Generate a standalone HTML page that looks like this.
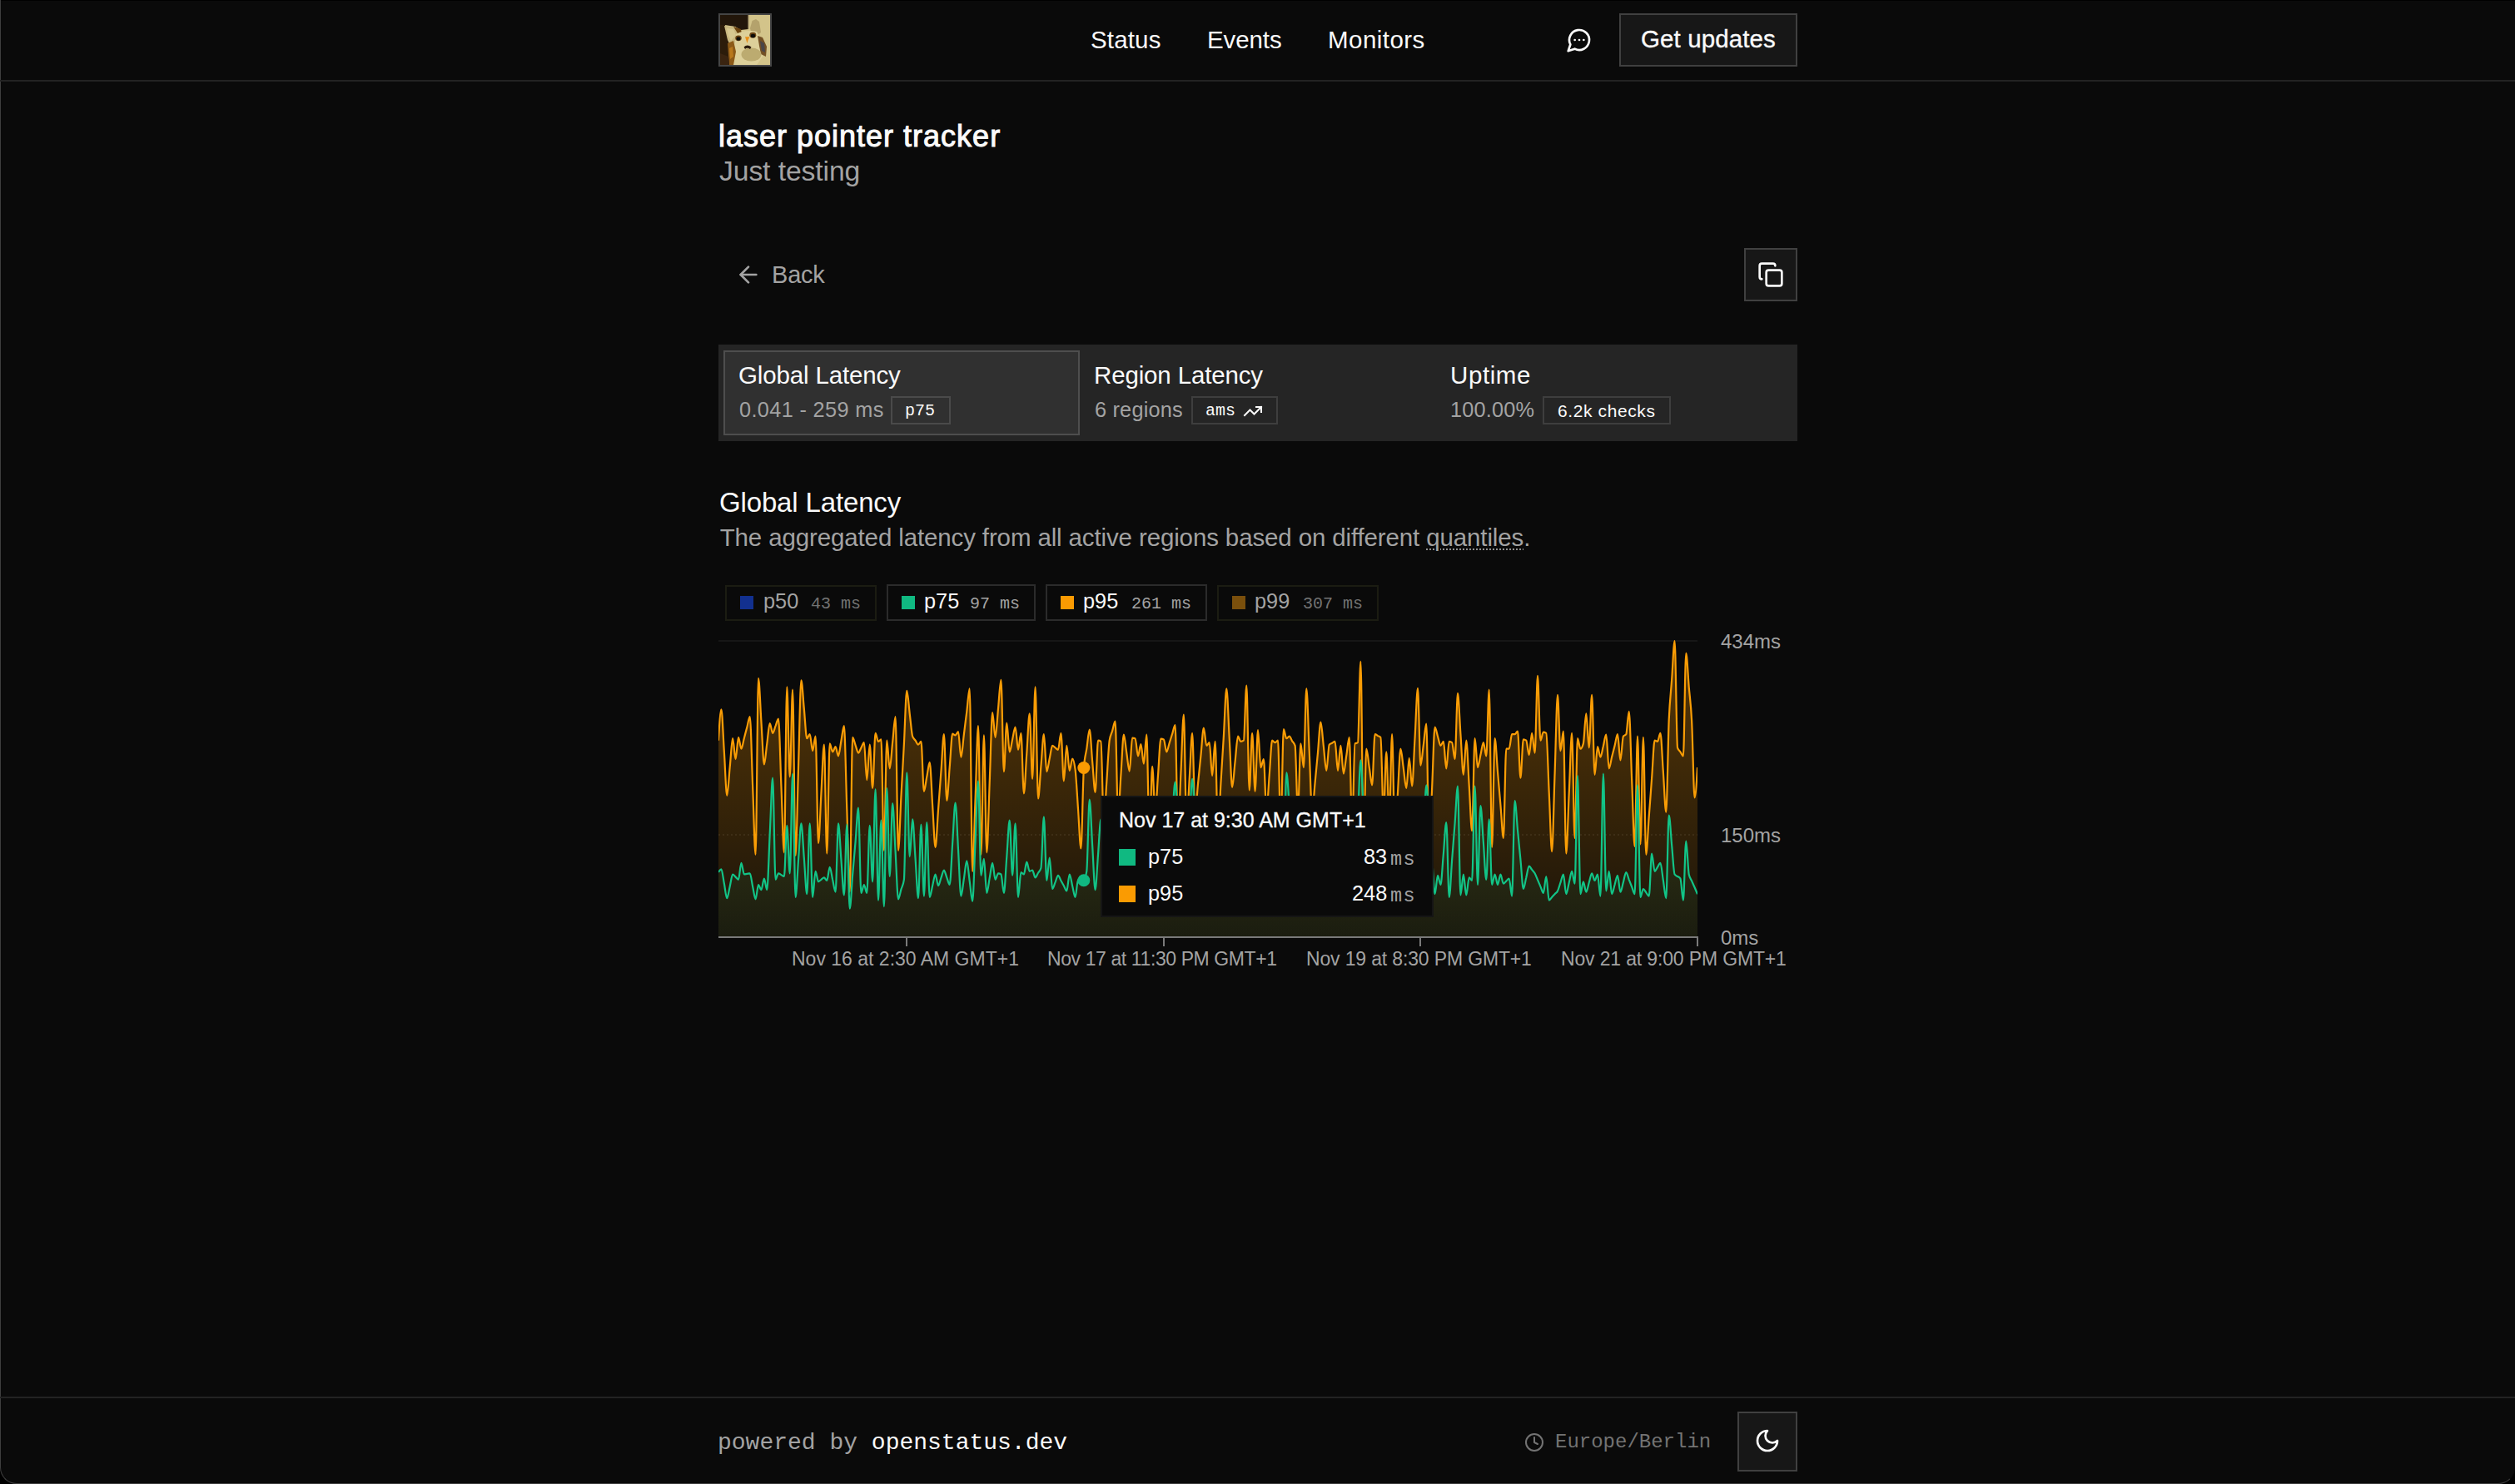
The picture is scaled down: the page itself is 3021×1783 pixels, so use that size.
<!DOCTYPE html>
<html><head><meta charset="utf-8">
<style>
*{box-sizing:border-box;margin:0;padding:0}
html,body{width:3021px;height:1783px;overflow:hidden;background:#000}
body{position:relative;font-family:"Liberation Sans",sans-serif;color:#fafafa}
.win{position:absolute;left:0;top:0;width:3021px;height:1783px;background:#0a0a0a;border-left:1px solid #3e3e3e;border-bottom:1px solid #3e3e3e;border-right:1px solid #0a0a0a;border-radius:0 0 20px 20px}
.t{position:absolute;white-space:nowrap;line-height:1}
.s{font-family:"Liberation Sans",sans-serif}
.m{font-family:"Liberation Mono",monospace}
.hline{position:absolute;left:0;width:3021px;height:2px;background:#232323}
.btn{position:absolute;background:#171717;border:2px solid #404040}
.badge{position:absolute;border:2px solid #3e3e3e}
.leg{position:absolute;top:702px;height:44px;border:2px solid #262626}
.sq{position:absolute;width:16px;height:16px}
svg{position:absolute;overflow:visible}
</style></head><body>
<div class="win"></div><div style="position:absolute;left:1px;top:0;width:3020px;height:1px;background:#000"></div>
<!-- header -->
<div class="hline" style="top:96px"></div>
<div style="position:absolute;left:863px;top:16px;width:64px;height:64px;border:2px solid #454545;overflow:hidden;background:#2a1a08">
<svg style="left:0;top:0" width="60" height="60" viewBox="0 0 60 60">
<rect width="60" height="60" fill="#d3c48a"/>
<path d="M0 0H34V17L25 18L18 14L6 12L0 13Z" fill="#22160a"/>
<path d="M0 12L6 12L9 28L13 40L12 60H0Z" fill="#2c1c0a"/>
<rect x="33.5" y="0" width="1.6" height="17" fill="#b8a878"/>
<path d="M5 13L18 14L24 19L20 30L13 38L9 30Z" fill="#c9b880"/>
<path d="M8 16L16 17L19 24L13 31L10 25Z" fill="#d6c790"/>
<path d="M16 14L25 17L26 23L21 22Z" fill="#6a420e"/>
<path d="M36 16L38.5 7L43 5L47 8L49 21L44 25L37 20Z" fill="#b4a26c"/>
<path d="M19 23Q30 17 44 20L50 30L51 50L44 60H14L17 42Z" fill="#ddd09a"/>
<path d="M9 34L16 31L19 44L16 60L11 60L10 48Z" fill="#8c5a18"/>
<path d="M11 40L15 38L16 50L12 53Z" fill="#b8781c"/>
<path d="M0 46L10 50L11 60H0Z" fill="#3a2410"/>
<path d="M45 25L51 27L56 38L55 50L49 47L47 37Z" fill="#735024"/>
<path d="M48 31L53 34L54 45L50 43Z" fill="#4a4648"/>
<ellipse cx="37.5" cy="47.5" rx="12" ry="8" fill="#bcab70"/>
<ellipse cx="22" cy="27.8" rx="3.8" ry="3.4" fill="#6a4414"/>
<ellipse cx="22" cy="28.5" rx="2.5" ry="2.3" fill="#0d0d0a"/>
<ellipse cx="39.3" cy="24.2" rx="4" ry="3.4" fill="#6a4414"/>
<ellipse cx="39.5" cy="25" rx="2.7" ry="2.3" fill="#0d0d0a"/>
<path d="M30 26.3L35.5 26.3L33.5 30.5L32.5 34Z" fill="#e8901a"/>
<path d="M28.5 38.5Q32.5 34.5 37.5 38.5L36 41Q32.5 38.5 30 41Z" fill="#2a1a0a"/>
</svg>

</div>
<div class="t s" style="left:1310px;top:32.5px;font-size:29.5px;letter-spacing:0.15px">Status</div>
<div class="t s" style="left:1450px;top:32.5px;font-size:29.5px;letter-spacing:-0.1px">Events</div>
<div class="t s" style="left:1595px;top:32.5px;font-size:29.5px;letter-spacing:0.45px">Monitors</div>
<svg style="left:1881px;top:32.3px" width="32" height="32" viewBox="0 0 24 24" fill="none" stroke="#fafafa" stroke-width="2" stroke-linecap="round" stroke-linejoin="round"><path d="M7.9 20A9 9 0 1 0 4 16.1L2 22Z"/><path d="M8 12h.01"/><path d="M12 12h.01"/><path d="M16 12h.01"/></svg>
<div class="btn" style="left:1945px;top:16px;width:214px;height:64px"></div>
<div class="t s" style="left:1971px;top:32px;font-size:29.5px;letter-spacing:0.1px;-webkit-text-stroke:0.35px #fafafa">Get updates</div>

<!-- title -->
<div class="t s" style="left:863px;top:145.5px;font-size:36px;letter-spacing:1px;-webkit-text-stroke:1px #fafafa">laser pointer tracker</div>
<div class="t s" style="left:864px;top:188.5px;font-size:33.7px;letter-spacing:-0.1px;color:#a3a3a3">Just testing</div>

<!-- back -->
<svg style="left:882.7px;top:313.6px" width="32" height="32" viewBox="0 0 24 24" fill="none" stroke="#a3a3a3" stroke-width="2" stroke-linecap="round" stroke-linejoin="round"><path d="m12 19-7-7 7-7"/><path d="M19 12H5"/></svg>
<div class="t s" style="left:927px;top:316.2px;font-size:29px;letter-spacing:-0.2px;color:#a3a3a3">Back</div>
<div class="btn" style="left:2095px;top:298px;width:64px;height:64px"></div>
<svg style="left:2111px;top:313.6px" width="32" height="32" viewBox="0 0 24 24" fill="none" stroke="#fafafa" stroke-width="2" stroke-linecap="round" stroke-linejoin="round"><rect width="14" height="14" x="8" y="8" rx="2" ry="2"/><path d="M4 16c-1.1 0-2-.9-2-2V4c0-1.1.9-2 2-2h10c1.1 0 2 .9 2 2"/></svg>

<!-- tabs -->
<div style="position:absolute;left:863px;top:414px;width:1296px;height:116px;background:#252525"></div>
<div style="position:absolute;left:869px;top:421px;width:428px;height:102px;background:#303030;border:2px solid #4e4e4e"></div>
<div class="t s" style="left:887px;top:435.5px;font-size:29.5px;letter-spacing:-0.15px">Global Latency</div>
<div class="t s" style="left:888px;top:479.5px;font-size:25.3px;letter-spacing:0.35px;color:#a3a3a3">0.041 - 259 ms</div>
<div class="badge" style="left:1070px;top:476px;width:72px;height:34px;border-color:#4a4a4a"></div>
<div class="t m" style="left:1087px;top:484px;font-size:20px">p75</div>

<div class="t s" style="left:1314px;top:435.5px;font-size:29.5px;letter-spacing:-0.15px">Region Latency</div>
<div class="t s" style="left:1315px;top:479.5px;font-size:25.3px;letter-spacing:0.2px;color:#a3a3a3">6 regions</div>
<div class="badge" style="left:1431px;top:476px;width:104px;height:34px"></div>
<div class="t m" style="left:1448px;top:484px;font-size:20px">ams</div>
<svg style="left:1492.5px;top:481.5px" width="24" height="24" viewBox="0 0 24 24" fill="none" stroke="#fafafa" stroke-width="2" stroke-linecap="square" stroke-linejoin="miter"><polyline points="22 7 13.5 15.5 8.5 10.5 2 17"/><polyline points="16 7 22 7 22 13"/></svg>

<div class="t s" style="left:1742px;top:435.5px;font-size:29.5px;letter-spacing:0.6px">Uptime</div>
<div class="t s" style="left:1742px;top:479.5px;font-size:25.3px;letter-spacing:0.2px;color:#a3a3a3">100.00%</div>
<div class="badge" style="left:1853px;top:476px;width:154px;height:34px"></div>
<div class="t s" style="left:1871px;top:483px;font-size:21px;letter-spacing:0.6px">6.2k checks</div>

<!-- section -->
<div class="t s" style="left:864px;top:586.5px;font-size:33px;letter-spacing:-0.15px">Global Latency</div>
<div class="t s" style="left:864.7px;top:630.9px;font-size:29.5px;letter-spacing:-0.13px;color:#a3a3a3">The aggregated latency from all active regions based on different <span style="text-decoration:underline dotted #8f8f8f;text-decoration-thickness:2px;text-underline-offset:4px">quantiles</span>.</div>

<!-- legend -->
<div style="position:absolute;left:871px;top:703px;width:182px;height:43px;border:2px solid #1b1c12"></div>
<div class="sq" style="left:889px;top:716px;background:#12308f"></div>
<div class="t s" style="left:917px;top:710px;font-size:25.3px;color:#a3a3a3">p50</div>
<div class="t m" style="left:974px;top:716px;font-size:20px;color:#737373">43 ms</div>

<div style="position:absolute;left:1065px;top:702px;width:179px;height:44px;border:2px solid #2b2b2b"></div>
<div class="sq" style="left:1083px;top:716px;background:#10b981"></div>
<div class="t s" style="left:1110px;top:710px;font-size:25.3px;color:#fafafa">p75</div>
<div class="t m" style="left:1165px;top:716px;font-size:20px;color:#a3a3a3">97 ms</div>

<div style="position:absolute;left:1256px;top:702px;width:194px;height:44px;border:2px solid #2b2b2b"></div>
<div class="sq" style="left:1274px;top:716px;background:#fa9b02"></div>
<div class="t s" style="left:1301px;top:710px;font-size:25.3px;color:#fafafa">p95</div>
<div class="t m" style="left:1359px;top:716px;font-size:20px;color:#a3a3a3">261 ms</div>

<div style="position:absolute;left:1462px;top:703px;width:194px;height:43px;border:2px solid #1b1c12"></div>
<div class="sq" style="left:1480px;top:716px;background:#7a4f0c"></div>
<div class="t s" style="left:1507px;top:710px;font-size:25.3px;color:#a3a3a3">p99</div>
<div class="t m" style="left:1565px;top:716px;font-size:20px;color:#737373">307 ms</div>


<!-- chart -->
<svg style="left:0;top:0" width="3021" height="1783" viewBox="0 0 3021 1783">
<defs>
<linearGradient id="go" x1="0" y1="0" x2="0" y2="1"><stop offset="0" stop-color="#ff9a00" stop-opacity="0.32"/><stop offset="1" stop-color="#ff9a00" stop-opacity="0.07"/></linearGradient>
<linearGradient id="gg" x1="0" y1="0" x2="0" y2="1"><stop offset="0" stop-color="#10b981" stop-opacity="0.13"/><stop offset="1" stop-color="#10b981" stop-opacity="0.05"/></linearGradient>
<clipPath id="cp"><rect x="863" y="700" width="1176" height="426"/></clipPath>
</defs>
<line x1="863" y1="770" x2="2039" y2="770" stroke="#171717" stroke-width="2"/>
<line x1="863" y1="1003" x2="2039" y2="1003" stroke="#3a3a3a" stroke-opacity="0.35" stroke-width="2" stroke-dasharray="2 3"/>
<g clip-path="url(#cp)">
<path d="M863.0,889.7C864.1,871.0,865.3,852.3,866.4,852.3C867.6,852.3,868.7,886.8,869.9,904.0C871.0,921.3,872.1,955.8,873.3,955.8C874.4,955.8,875.6,932.9,876.7,921.5C877.9,910.0,879.0,887.2,880.1,887.2C881.3,887.2,882.4,912.1,883.6,912.1C884.7,912.1,885.9,885.9,887.0,885.9C888.1,885.9,889.3,899.7,890.4,899.7C891.6,899.7,892.7,891.1,893.9,886.8C895.0,882.5,896.1,878.2,897.3,873.9C898.4,869.6,899.6,861.0,900.7,861.0C901.9,861.0,903.0,916.3,904.1,943.9C905.3,971.6,906.4,1026.8,907.6,1026.8C908.7,1026.8,909.9,814.9,911.0,814.9C912.1,814.9,913.3,849.4,914.4,866.6C915.6,883.9,916.7,918.4,917.9,918.4C919.0,918.4,920.1,901.9,921.3,893.7C922.4,885.4,923.6,869.0,924.7,869.0C925.9,869.0,927.0,880.9,928.1,880.9C929.3,880.9,930.4,875.1,931.6,872.2C932.7,869.3,933.9,863.5,935.0,863.5C936.1,863.5,937.3,917.1,938.4,943.9C939.6,970.7,940.7,1024.3,941.9,1024.3C943.0,1024.3,944.1,825.3,945.3,825.3C946.4,825.3,947.6,933.3,948.7,933.3C949.9,933.3,951.0,828.6,952.1,828.6C953.3,828.6,954.4,1028.1,955.6,1028.1C956.7,1028.1,957.9,957.8,959.0,922.7C960.1,887.6,961.3,817.4,962.4,817.4C963.6,817.4,964.7,840.6,965.9,852.3C967.0,863.9,968.1,887.2,969.3,887.2C970.4,887.2,971.6,882.2,972.7,882.2C973.9,882.2,975.0,902.1,976.1,902.1C977.3,902.1,978.4,884.7,979.6,884.7C980.7,884.7,981.9,1013.1,983.0,1013.1C984.1,1013.1,985.3,973.6,986.4,953.9C987.6,934.1,988.7,894.7,989.9,894.7C991.0,894.7,992.1,1025.6,993.3,1025.6C994.4,1025.6,995.6,893.4,996.7,893.4C997.9,893.4,999.0,903.4,1000.1,903.4C1001.3,903.4,1002.4,897.2,1003.6,897.2C1004.7,897.2,1005.9,908.4,1007.0,908.4C1008.1,908.4,1009.3,896.3,1010.4,890.3C1011.6,884.3,1012.7,872.2,1013.9,872.2C1015.0,872.2,1016.1,938.7,1017.3,972.0C1018.4,1005.2,1019.6,1071.7,1020.7,1071.7C1021.9,1071.7,1023.0,885.9,1024.1,885.9C1025.3,885.9,1026.4,892.2,1027.6,895.3C1028.7,898.4,1029.9,904.6,1031.0,904.6C1032.1,904.6,1033.3,900.5,1034.4,898.4C1035.6,896.3,1036.7,892.2,1037.9,892.2C1039.0,892.2,1040.1,937.1,1041.3,937.1C1042.4,937.1,1043.6,894.7,1044.7,894.7C1045.9,894.7,1047.0,947.0,1048.1,947.0C1049.3,947.0,1050.4,880.9,1051.6,880.9C1052.7,880.9,1053.9,890.9,1055.0,890.9C1056.1,890.9,1057.3,888.4,1058.4,888.4C1059.6,888.4,1060.7,1021.8,1061.9,1021.8C1063.0,1021.8,1064.1,889.7,1065.3,889.7C1066.4,889.7,1067.6,923.3,1068.7,923.3C1069.9,923.3,1071.0,902.6,1072.1,892.2C1073.3,881.8,1074.4,861.0,1075.6,861.0C1076.7,861.0,1077.9,1021.8,1079.0,1021.8C1080.1,1021.8,1081.3,979.2,1082.4,957.8C1083.6,936.5,1084.7,915.2,1085.9,893.8C1087.0,872.5,1088.1,829.8,1089.3,829.8C1090.4,829.8,1091.6,848.1,1092.7,857.3C1093.9,866.4,1095.0,881.4,1096.1,884.7C1097.3,888.0,1098.4,888.0,1099.6,889.7C1100.7,891.3,1101.9,894.7,1103.0,894.7C1104.1,894.7,1105.3,890.9,1106.4,890.9C1107.6,890.9,1108.7,950.8,1109.9,950.8C1111.0,950.8,1112.1,939.1,1113.3,933.3C1114.4,927.5,1115.6,915.9,1116.7,915.9C1117.9,915.9,1119.0,949.9,1120.1,967.0C1121.3,984.0,1122.4,1018.1,1123.6,1018.1C1124.7,1018.1,1125.9,987.9,1127.0,972.8C1128.1,957.7,1129.3,942.6,1130.4,927.5C1131.6,912.4,1132.7,882.2,1133.9,882.2C1135.0,882.2,1136.1,962.0,1137.3,962.0C1138.4,962.0,1139.6,935.2,1140.7,921.8C1141.9,908.5,1143.0,881.7,1144.1,881.7C1145.3,881.7,1146.4,883.4,1147.6,883.4C1148.7,883.4,1149.9,879.2,1151.0,879.2C1152.1,879.2,1153.3,909.6,1154.4,909.6C1155.6,909.6,1156.7,891.3,1157.9,882.2C1159.0,873.1,1160.1,863.9,1161.3,854.8C1162.4,845.6,1163.6,827.3,1164.7,827.3C1165.9,827.3,1167.0,1046.8,1168.1,1046.8C1169.3,1046.8,1170.4,988.6,1171.6,959.5C1172.7,930.4,1173.9,872.2,1175.0,872.2C1176.1,872.2,1177.3,1026.8,1178.4,1026.8C1179.6,1026.8,1180.7,883.4,1181.9,883.4C1183.0,883.4,1184.1,1024.3,1185.3,1024.3C1186.4,1024.3,1187.6,968.2,1188.7,940.2C1189.9,912.1,1191.0,856.0,1192.1,856.0C1193.3,856.0,1194.4,885.9,1195.6,885.9C1196.7,885.9,1197.9,862.9,1199.0,851.4C1200.1,839.9,1201.3,816.9,1202.4,816.9C1203.6,816.9,1204.7,927.1,1205.9,927.1C1207.0,927.1,1208.1,868.5,1209.3,868.5C1210.4,868.5,1211.6,903.4,1212.7,903.4C1213.9,903.4,1215.0,893.4,1216.1,888.4C1217.3,883.4,1218.4,873.5,1219.6,873.5C1220.7,873.5,1221.9,900.9,1223.0,900.9C1224.1,900.9,1225.3,880.9,1226.4,880.9C1227.6,880.9,1228.7,953.3,1229.9,953.3C1231.0,953.3,1232.1,921.3,1233.3,905.3C1234.4,889.3,1235.6,857.3,1236.7,857.3C1237.9,857.3,1239.0,935.8,1240.1,935.8C1241.3,935.8,1242.4,825.3,1243.6,825.3C1244.7,825.3,1245.9,959.5,1247.0,959.5C1248.1,959.5,1249.3,933.7,1250.4,920.8C1251.6,908.0,1252.7,882.2,1253.9,882.2C1255.0,882.2,1256.1,927.1,1257.3,927.1C1258.4,927.1,1259.6,916.7,1260.7,911.5C1261.9,906.3,1263.0,895.9,1264.1,895.9C1265.3,895.9,1266.4,897.6,1267.6,898.4C1268.7,899.2,1269.9,900.9,1271.0,900.9C1272.1,900.9,1273.3,880.9,1274.4,880.9C1275.6,880.9,1276.7,938.3,1277.9,938.3C1279.0,938.3,1280.1,895.9,1281.3,895.9C1282.4,895.9,1283.6,925.8,1284.7,925.8C1285.9,925.8,1287.0,911.6,1288.1,911.6C1289.3,911.6,1290.4,915.9,1291.6,924.6C1292.7,933.2,1293.9,956.2,1295.0,972.0C1296.1,987.8,1297.3,1019.4,1298.4,1019.4C1299.6,1019.4,1300.7,937.9,1301.9,922.6C1303.0,907.3,1304.1,907.3,1305.3,899.7C1306.4,892.0,1307.6,876.7,1308.7,876.7C1309.9,876.7,1311.0,901.8,1312.1,914.4C1313.3,926.9,1314.4,952.0,1315.6,952.0C1316.7,952.0,1317.9,889.7,1319.0,889.7C1320.1,889.7,1321.3,890.1,1322.4,890.9C1323.6,891.8,1324.7,988.9,1325.9,988.9C1327.0,988.9,1328.1,955.8,1329.3,939.3C1330.4,922.8,1331.6,897.3,1332.7,889.7C1333.9,882.0,1335.0,882.0,1336.1,878.2C1337.3,874.4,1338.4,866.7,1339.6,866.7C1340.7,866.7,1341.9,979.9,1343.0,979.9C1344.1,979.9,1345.3,947.5,1346.4,931.3C1347.6,915.1,1348.7,882.7,1349.9,882.7C1351.0,882.7,1352.1,897.3,1353.3,904.6C1354.4,912.0,1355.6,926.6,1356.7,926.6C1357.9,926.6,1359.0,886.7,1360.1,886.7C1361.3,886.7,1362.4,886.8,1363.6,887.2C1364.7,887.5,1365.9,908.4,1367.0,908.4C1368.1,908.4,1369.3,894.2,1370.4,894.2C1371.6,894.2,1372.7,917.6,1373.9,917.6C1375.0,917.6,1376.1,882.7,1377.3,882.7C1378.4,882.7,1379.6,1006.1,1380.7,1006.1C1381.9,1006.1,1383.0,920.8,1384.1,920.8C1385.3,920.8,1386.4,975.8,1387.6,975.8C1388.7,975.8,1389.9,946.4,1391.0,931.7C1392.1,917.0,1393.3,887.7,1394.4,887.7C1395.6,887.7,1396.7,887.9,1397.9,888.4C1399.0,888.9,1400.1,903.4,1401.3,903.4C1402.4,903.4,1403.6,896.2,1404.7,892.6C1405.9,889.0,1407.0,885.4,1408.1,881.8C1409.3,878.2,1410.4,871.0,1411.6,871.0C1412.7,871.0,1413.9,1000.0,1415.0,1000.0C1416.1,1000.0,1417.3,952.9,1418.4,929.3C1419.6,905.7,1420.7,858.5,1421.9,858.5C1423.0,858.5,1424.1,991.1,1425.3,991.1C1426.4,991.1,1427.6,954.4,1428.7,936.0C1429.9,917.7,1431.0,880.9,1432.1,880.9C1433.3,880.9,1434.4,975.0,1435.6,975.0C1436.7,975.0,1437.9,952.7,1439.0,941.6C1440.1,930.4,1441.3,919.3,1442.4,908.1C1443.6,897.0,1444.7,874.7,1445.9,874.7C1447.0,874.7,1448.1,895.9,1449.3,895.9C1450.4,895.9,1451.6,892.2,1452.7,892.2C1453.9,892.2,1455.0,932.1,1456.1,932.1C1457.3,932.1,1458.4,890.9,1459.6,890.9C1460.7,890.9,1461.9,998.5,1463.0,998.5C1464.1,998.5,1465.3,960.5,1466.4,941.5C1467.6,922.4,1468.7,903.4,1469.9,884.4C1471.0,865.4,1472.1,827.3,1473.3,827.3C1474.4,827.3,1475.6,866.8,1476.7,886.6C1477.9,906.3,1479.0,945.8,1480.1,945.8C1481.3,945.8,1482.4,925.4,1483.6,915.2C1484.7,905.1,1485.9,884.7,1487.0,884.7C1488.1,884.7,1489.3,890.9,1490.4,890.9C1491.6,890.9,1492.7,890.5,1493.9,889.7C1495.0,888.8,1496.1,823.6,1497.3,823.6C1498.4,823.6,1499.6,949.5,1500.7,949.5C1501.9,949.5,1503.0,880.9,1504.1,880.9C1505.3,880.9,1506.4,950.8,1507.6,950.8C1508.7,950.8,1509.9,877.2,1511.0,877.2C1512.1,877.2,1513.3,922.1,1514.4,922.1C1515.6,922.1,1516.7,912.1,1517.9,912.1C1519.0,912.1,1520.1,973.9,1521.3,973.9C1522.4,973.9,1523.6,945.8,1524.7,931.8C1525.9,917.8,1527.0,889.7,1528.1,889.7C1529.3,889.7,1530.4,892.2,1531.6,892.2C1532.7,892.2,1533.9,889.7,1535.0,889.7C1536.1,889.7,1537.3,994.7,1538.4,994.7C1539.6,994.7,1540.7,876.0,1541.9,876.0C1543.0,876.0,1544.1,887.2,1545.3,887.2C1546.4,887.2,1547.6,884.7,1548.7,884.7C1549.9,884.7,1551.0,888.4,1552.1,890.3C1553.3,892.2,1554.4,892.2,1555.6,895.9C1556.7,899.7,1557.9,975.6,1559.0,975.6C1560.1,975.6,1561.3,893.4,1562.4,893.4C1563.6,893.4,1564.7,922.1,1565.9,922.1C1567.0,922.1,1568.1,827.3,1569.3,827.3C1570.4,827.3,1571.6,877.1,1572.7,902.0C1573.9,926.9,1575.0,976.7,1576.1,976.7C1577.3,976.7,1578.4,952.5,1579.6,940.4C1580.7,928.3,1581.9,916.2,1583.0,904.1C1584.1,892.0,1585.3,867.7,1586.4,867.7C1587.6,867.7,1588.7,887.1,1589.9,896.8C1591.0,906.5,1592.1,925.8,1593.3,925.8C1594.4,925.8,1595.6,895.9,1596.7,894.7C1597.9,893.4,1599.0,893.4,1600.1,892.8C1601.3,892.2,1602.4,890.9,1603.6,890.9C1604.7,890.9,1605.9,925.8,1607.0,925.8C1608.1,925.8,1609.3,895.9,1610.4,895.9C1611.6,895.9,1612.7,929.6,1613.9,929.6C1615.0,929.6,1616.1,915.0,1617.3,907.8C1618.4,900.5,1619.6,885.9,1620.7,885.9C1621.9,885.9,1623.0,994.2,1624.1,994.2C1625.3,994.2,1626.4,894.2,1627.6,893.4C1628.7,892.6,1629.9,893.0,1631.0,892.2C1632.1,891.3,1633.3,794.9,1634.4,794.9C1635.6,794.9,1636.7,1015.3,1637.9,1015.3C1639.0,1015.3,1640.1,899.7,1641.3,899.7C1642.4,899.7,1643.6,914.2,1644.7,921.5C1645.9,928.7,1647.0,943.3,1648.1,943.3C1649.3,943.3,1650.4,882.2,1651.6,882.2C1652.7,882.2,1653.9,883.4,1655.0,884.1C1656.1,884.7,1657.3,884.7,1658.4,885.9C1659.6,887.2,1660.7,978.5,1661.9,978.5C1663.0,978.5,1664.1,903.4,1665.3,903.4C1666.4,903.4,1667.6,983.7,1668.7,983.7C1669.9,983.7,1671.0,882.2,1672.1,882.2C1673.3,882.2,1674.4,1004.8,1675.6,1004.8C1676.7,1004.8,1677.9,969.8,1679.0,952.2C1680.1,934.7,1681.3,899.7,1682.4,899.7C1683.6,899.7,1684.7,915.4,1685.9,923.3C1687.0,931.2,1688.1,947.0,1689.3,947.0C1690.4,947.0,1691.6,910.9,1692.7,910.9C1693.9,910.9,1695.0,944.5,1696.1,944.5C1697.3,944.5,1698.4,905.3,1699.6,885.7C1700.7,866.1,1701.9,826.8,1703.0,826.8C1704.1,826.8,1705.3,919.6,1706.4,919.6C1707.6,919.6,1708.7,903.0,1709.9,894.7C1711.0,886.4,1712.1,869.7,1713.3,869.7C1714.4,869.7,1715.6,1021.6,1716.7,1021.6C1717.9,1021.6,1719.0,972.2,1720.1,947.5C1721.3,922.8,1722.4,873.5,1723.6,873.5C1724.7,873.5,1725.9,880.9,1727.0,884.7C1728.1,888.4,1729.3,895.9,1730.4,895.9C1731.6,895.9,1732.7,890.9,1733.9,890.9C1735.0,890.9,1736.1,923.3,1737.3,923.3C1738.4,923.3,1739.6,890.9,1740.7,890.9C1741.9,890.9,1743.0,891.3,1744.1,892.2C1745.3,893.0,1746.4,912.1,1747.6,912.1C1748.7,912.1,1749.9,832.8,1751.0,832.8C1752.1,832.8,1753.3,865.5,1754.4,881.8C1755.6,898.2,1756.7,930.8,1757.9,930.8C1759.0,930.8,1760.1,889.7,1761.3,889.7C1762.4,889.7,1763.6,925.8,1764.7,943.9C1765.9,962.0,1767.0,998.2,1768.1,998.2C1769.3,998.2,1770.4,887.2,1771.6,887.2C1772.7,887.2,1773.9,922.1,1775.0,922.1C1776.1,922.1,1777.3,912.1,1778.4,907.1C1779.6,902.1,1780.7,892.2,1781.9,892.2C1783.0,892.2,1784.1,908.4,1785.3,908.4C1786.4,908.4,1787.6,828.6,1788.7,828.6C1789.9,828.6,1791.0,1018.1,1792.1,1018.1C1793.3,1018.1,1794.4,887.2,1795.6,887.2C1796.7,887.2,1797.9,913.8,1799.0,927.1C1800.1,940.4,1801.3,953.7,1802.4,967.0C1803.6,980.3,1804.7,1006.9,1805.9,1006.9C1807.0,1006.9,1808.1,899.7,1809.3,899.7C1810.4,899.7,1811.6,899.7,1812.7,899.7C1813.9,899.7,1815.0,882.2,1816.1,882.2C1817.3,882.2,1818.4,882.2,1819.6,882.2C1820.7,882.2,1821.9,878.5,1823.0,878.5C1824.1,878.5,1825.3,934.6,1826.4,934.6C1827.6,934.6,1828.7,888.4,1829.9,888.4C1831.0,888.4,1832.1,888.8,1833.3,889.7C1834.4,890.5,1835.6,907.1,1836.7,907.1C1837.9,907.1,1839.0,880.9,1840.1,880.9C1841.3,880.9,1842.4,904.6,1843.6,904.6C1844.7,904.6,1845.9,811.9,1847.0,811.9C1848.1,811.9,1849.3,889.7,1850.4,889.7C1851.6,889.7,1852.7,879.7,1853.9,879.7C1855.0,879.7,1856.1,880.1,1857.3,880.9C1858.4,881.8,1859.6,928.3,1860.7,952.0C1861.9,975.7,1863.0,1023.1,1864.1,1023.1C1865.3,1023.1,1866.4,960.3,1867.6,929.0C1868.7,897.6,1869.9,834.8,1871.0,834.8C1872.1,834.8,1873.3,902.1,1874.4,902.1C1875.6,902.1,1876.7,878.5,1877.9,878.5C1879.0,878.5,1880.1,1025.6,1881.3,1025.6C1882.4,1025.6,1883.6,977.4,1884.7,953.3C1885.9,929.2,1887.0,880.9,1888.1,880.9C1889.3,880.9,1890.4,1006.9,1891.6,1006.9C1892.7,1006.9,1893.9,887.2,1895.0,887.2C1896.1,887.2,1897.3,899.7,1898.4,899.7C1899.6,899.7,1900.7,897.6,1901.9,893.4C1903.0,889.3,1904.1,857.3,1905.3,857.3C1906.4,857.3,1907.6,898.4,1908.7,898.4C1909.9,898.4,1911.0,834.8,1912.1,834.8C1913.3,834.8,1914.4,930.8,1915.6,930.8C1916.7,930.8,1917.9,897.2,1919.0,897.2C1920.1,897.2,1921.3,909.6,1922.4,909.6C1923.6,909.6,1924.7,900.6,1925.9,896.2C1927.0,891.7,1928.1,882.7,1929.3,882.7C1930.4,882.7,1931.6,923.3,1932.7,923.3C1933.9,923.3,1935.0,914.2,1936.1,909.6C1937.3,905.1,1938.4,900.5,1939.6,895.9C1940.7,891.3,1941.9,882.2,1943.0,882.2C1944.1,882.2,1945.3,913.4,1946.4,913.4C1947.6,913.4,1948.7,886.4,1949.9,884.7C1951.0,883.0,1952.1,883.9,1953.3,882.2C1954.4,880.5,1955.6,854.8,1956.7,854.8C1957.9,854.8,1959.0,908.8,1960.1,935.8C1961.3,962.8,1962.4,1016.9,1963.6,1016.9C1964.7,1016.9,1965.9,884.7,1967.0,884.7C1968.1,884.7,1969.3,1014.4,1970.4,1014.4C1971.6,1014.4,1972.7,885.9,1973.9,885.9C1975.0,885.9,1976.1,1026.8,1977.3,1026.8C1978.4,1026.8,1979.6,996.4,1980.7,981.1C1981.9,965.9,1983.0,950.6,1984.1,935.4C1985.3,920.2,1986.4,889.7,1987.6,889.7C1988.7,889.7,1989.9,890.9,1991.0,890.9C1992.1,890.9,1993.3,880.9,1994.4,880.9C1995.6,880.9,1996.7,912.5,1997.9,928.3C1999.0,944.1,2000.1,975.7,2001.3,975.7C2002.4,975.7,2003.6,891.1,2004.7,864.7C2005.9,838.3,2007.0,833.2,2008.1,817.4C2009.3,801.6,2010.4,770.0,2011.6,770.0C2012.7,770.0,2013.9,895.1,2015.0,898.4C2016.1,901.7,2017.3,901.7,2018.4,903.4C2019.6,905.1,2020.7,908.4,2021.9,908.4C2023.0,908.4,2024.1,784.9,2025.3,784.9C2026.4,784.9,2027.6,812.0,2028.7,825.5C2029.9,839.0,2031.0,843.9,2032.1,866.0C2033.3,888.1,2034.4,958.3,2035.6,958.3C2036.7,958.3,2037.9,940.2,2039.0,922.1L2039,1126L863,1126Z" fill="url(#go)"/>
<path d="M863.0,1048.0C864.1,1046.2,865.3,1044.3,866.4,1044.3C867.6,1044.3,868.7,1055.9,869.9,1061.7C871.0,1067.6,872.1,1079.2,873.3,1079.2C874.4,1079.2,875.6,1069.6,876.7,1064.9C877.9,1060.1,879.0,1050.5,880.1,1050.5C881.3,1050.5,882.4,1052.6,883.6,1053.6C884.7,1054.7,885.9,1056.8,887.0,1056.8C888.1,1056.8,889.3,1036.8,890.4,1036.8C891.6,1036.8,892.7,1050.5,893.9,1050.5C895.0,1050.5,896.1,1050.1,897.3,1049.9C898.4,1049.7,899.6,1049.3,900.7,1049.3C901.9,1049.3,903.0,1059.7,904.1,1064.9C905.3,1070.1,906.4,1080.4,907.6,1080.4C908.7,1080.4,909.9,1063.0,911.0,1063.0C912.1,1063.0,913.3,1069.2,914.4,1069.2C915.6,1069.2,916.7,1055.5,917.9,1055.5C919.0,1055.5,920.1,1069.2,921.3,1069.2C922.4,1069.2,923.6,1024.3,924.7,1001.9C925.9,979.5,927.0,934.6,928.1,934.6C929.3,934.6,930.4,1056.8,931.6,1056.8C932.7,1056.8,933.9,1049.3,935.0,1049.3C936.1,1049.3,937.3,1050.5,938.4,1051.1C939.6,1051.8,940.7,1053.0,941.9,1053.0C943.0,1053.0,944.1,991.9,945.3,991.9C946.4,991.9,947.6,1049.3,948.7,1049.3C949.9,1049.3,951.0,929.6,952.1,929.6C953.3,929.6,954.4,1078.0,955.6,1078.0C956.7,1078.0,957.9,1048.4,959.0,1033.7C960.1,1018.9,961.3,989.4,962.4,989.4C963.6,989.4,964.7,1017.7,965.9,1031.8C967.0,1046.0,968.1,1074.2,969.3,1074.2C970.4,1074.2,971.6,989.4,972.7,989.4C973.9,989.4,975.0,1078.0,976.1,1078.0C977.3,1078.0,978.4,1046.8,979.6,1046.8C980.7,1046.8,981.9,1059.3,983.0,1059.3C984.1,1059.3,985.3,1057.6,986.4,1056.8C987.6,1055.9,988.7,1054.3,989.9,1054.3C991.0,1054.3,992.1,1058.0,993.3,1058.0C994.4,1058.0,995.6,1041.8,996.7,1041.8C997.9,1041.8,999.0,1051.8,1000.1,1056.8C1001.3,1061.7,1002.4,1071.7,1003.6,1071.7C1004.7,1071.7,1005.9,989.4,1007.0,989.4C1008.1,989.4,1009.3,1018.1,1010.4,1032.4C1011.6,1046.8,1012.7,1075.5,1013.9,1075.5C1015.0,1075.5,1016.1,990.7,1017.3,990.7C1018.4,990.7,1019.6,1091.7,1020.7,1091.7C1021.9,1091.7,1023.0,1064.8,1024.1,1051.4C1025.3,1037.9,1026.4,1024.5,1027.6,1011.0C1028.7,997.6,1029.9,970.7,1031.0,970.7C1032.1,970.7,1033.3,1073.0,1034.4,1073.0C1035.6,1073.0,1036.7,1063.0,1037.9,1063.0C1039.0,1063.0,1040.1,1073.0,1041.3,1073.0C1042.4,1073.0,1043.6,991.9,1044.7,991.9C1045.9,991.9,1047.0,1059.3,1048.1,1059.3C1049.3,1059.3,1050.4,948.3,1051.6,948.3C1052.7,948.3,1053.9,1081.7,1055.0,1081.7C1056.1,1081.7,1057.3,985.7,1058.4,985.7C1059.6,985.7,1060.7,1089.2,1061.9,1089.2C1063.0,1089.2,1064.1,947.0,1065.3,947.0C1066.4,947.0,1067.6,1053.0,1068.7,1053.0C1069.9,1053.0,1071.0,965.0,1072.1,965.0C1073.3,965.0,1074.4,1003.5,1075.6,1022.7C1076.7,1042.0,1077.9,1080.4,1079.0,1080.4C1080.1,1080.4,1081.3,1072.6,1082.4,1068.6C1083.6,1064.7,1084.7,1064.7,1085.9,1056.8C1087.0,1048.9,1088.1,928.3,1089.3,928.3C1090.4,928.3,1091.6,1029.3,1092.7,1029.3C1093.9,1029.3,1095.0,984.4,1096.1,984.4C1097.3,984.4,1098.4,1016.0,1099.6,1031.8C1100.7,1047.6,1101.9,1079.2,1103.0,1079.2C1104.1,1079.2,1105.3,990.7,1106.4,990.7C1107.6,990.7,1108.7,1076.7,1109.9,1076.7C1111.0,1076.7,1112.1,988.2,1113.3,988.2C1114.4,988.2,1115.6,1078.0,1116.7,1078.0C1117.9,1078.0,1119.0,1068.8,1120.1,1064.2C1121.3,1059.7,1122.4,1050.5,1123.6,1050.5C1124.7,1050.5,1125.9,1064.2,1127.0,1064.2C1128.1,1064.2,1129.3,1058.0,1130.4,1054.9C1131.6,1051.8,1132.7,1045.5,1133.9,1045.5C1135.0,1045.5,1136.1,1051.4,1137.3,1054.3C1138.4,1057.2,1139.6,1063.0,1140.7,1063.0C1141.9,1063.0,1143.0,1030.2,1144.1,1013.7C1145.3,997.3,1146.4,964.5,1147.6,964.5C1148.7,964.5,1149.9,1001.9,1151.0,1020.6C1152.1,1039.3,1153.3,1076.7,1154.4,1076.7C1155.6,1076.7,1156.7,1062.6,1157.9,1055.5C1159.0,1048.4,1160.1,1034.3,1161.3,1034.3C1162.4,1034.3,1163.6,1050.5,1164.7,1058.6C1165.9,1066.7,1167.0,1082.9,1168.1,1082.9C1169.3,1082.9,1170.4,1034.7,1171.6,1010.6C1172.7,986.5,1173.9,938.3,1175.0,938.3C1176.1,938.3,1177.3,1051.8,1178.4,1051.8C1179.6,1051.8,1180.7,1031.8,1181.9,1031.8C1183.0,1031.8,1184.1,1073.0,1185.3,1073.0C1186.4,1073.0,1187.6,1060.9,1188.7,1054.9C1189.9,1048.9,1191.0,1036.8,1192.1,1036.8C1193.3,1036.8,1194.4,1056.8,1195.6,1056.8C1196.7,1056.8,1197.9,1049.3,1199.0,1049.3C1200.1,1049.3,1201.3,1049.7,1202.4,1050.5C1203.6,1051.4,1204.7,1073.0,1205.9,1073.0C1207.0,1073.0,1208.1,1043.9,1209.3,1029.3C1210.4,1014.8,1211.6,985.7,1212.7,985.7C1213.9,985.7,1215.0,1051.8,1216.1,1051.8C1217.3,1051.8,1218.4,989.4,1219.6,989.4C1220.7,989.4,1221.9,1078.0,1223.0,1078.0C1224.1,1078.0,1225.3,1048.0,1226.4,1048.0C1227.6,1048.0,1228.7,1050.5,1229.9,1050.5C1231.0,1050.5,1232.1,1035.6,1233.3,1035.6C1234.4,1035.6,1235.6,1046.8,1236.7,1046.8C1237.9,1046.8,1239.0,1045.5,1240.1,1045.5C1241.3,1045.5,1242.4,1054.3,1243.6,1054.3C1244.7,1054.3,1245.9,1050.5,1247.0,1048.7C1248.1,1046.8,1249.3,1046.8,1250.4,1043.0C1251.6,1039.3,1252.7,981.4,1253.9,981.4C1255.0,981.4,1256.1,1058.0,1257.3,1058.0C1258.4,1058.0,1259.6,1030.6,1260.7,1030.6C1261.9,1030.6,1263.0,1068.0,1264.1,1068.0C1265.3,1068.0,1266.4,1062.6,1267.6,1059.9C1268.7,1057.2,1269.9,1051.8,1271.0,1051.8C1272.1,1051.8,1273.3,1055.9,1274.4,1058.0C1275.6,1060.1,1276.7,1062.2,1277.9,1064.2C1279.0,1066.3,1280.1,1070.5,1281.3,1070.5C1282.4,1070.5,1283.6,1050.5,1284.7,1050.5C1285.9,1050.5,1287.0,1059.7,1288.1,1064.2C1289.3,1068.8,1290.4,1078.0,1291.6,1078.0C1292.7,1078.0,1293.9,1056.8,1295.0,1056.8C1296.1,1056.8,1297.3,1056.9,1298.4,1057.0C1299.6,1057.1,1300.7,1057.3,1301.9,1057.3C1303.0,1057.3,1304.1,1053.8,1305.3,1046.8C1306.4,1039.8,1307.6,960.7,1308.7,960.7C1309.9,960.7,1311.0,996.9,1312.1,1015.0C1313.3,1033.1,1314.4,1069.2,1315.6,1069.2C1316.7,1069.2,1317.9,1041.0,1319.0,1026.8C1320.1,1012.7,1321.3,984.4,1322.4,984.4C1323.6,984.4,1324.7,1059.6,1325.9,1059.6C1327.0,1059.6,1328.1,1051.6,1329.3,1047.6C1330.4,1043.6,1331.6,1039.6,1332.7,1035.6C1333.9,1031.6,1335.0,1023.6,1336.1,1023.6C1337.3,1023.6,1338.4,1056.2,1339.6,1056.2C1340.7,1056.2,1341.9,1046.2,1343.0,1041.2C1344.1,1036.2,1345.3,1026.3,1346.4,1026.3C1347.6,1026.3,1348.7,1073.2,1349.9,1073.2C1351.0,1073.2,1352.1,1043.6,1353.3,1043.6C1354.4,1043.6,1355.6,1048.7,1356.7,1051.2C1357.9,1053.8,1359.0,1058.9,1360.1,1058.9C1361.3,1058.9,1362.4,1024.2,1363.6,1024.2C1364.7,1024.2,1365.9,1053.5,1367.0,1053.5C1368.1,1053.5,1369.3,1048.3,1370.4,1045.7C1371.6,1043.0,1372.7,1037.8,1373.9,1037.8C1375.0,1037.8,1376.1,1065.8,1377.3,1065.8C1378.4,1065.8,1379.6,1054.9,1380.7,1049.4C1381.9,1044.0,1383.0,1033.1,1384.1,1033.1C1385.3,1033.1,1386.4,1045.2,1387.6,1051.3C1388.7,1057.3,1389.9,1069.4,1391.0,1069.4C1392.1,1069.4,1393.3,1043.3,1394.4,1043.3C1395.6,1043.3,1396.7,1075.2,1397.9,1075.2C1399.0,1075.2,1400.1,1061.0,1401.3,1053.9C1402.4,1046.8,1403.6,1043.9,1404.7,1032.6C1405.9,1021.3,1407.0,1001.6,1408.1,986.1C1409.3,970.6,1410.4,939.6,1411.6,939.6C1412.7,939.6,1413.9,976.4,1415.0,994.9C1416.1,1013.3,1417.3,1041.9,1418.4,1050.2C1419.6,1058.5,1420.7,1062.6,1421.9,1062.6C1423.0,1062.6,1424.1,1057.4,1425.3,1046.8C1426.4,1036.3,1427.6,1009.8,1428.7,991.3C1429.9,972.8,1431.0,935.8,1432.1,935.8C1433.3,935.8,1434.4,968.4,1435.6,984.7C1436.7,1001.0,1437.9,1020.0,1439.0,1033.6C1440.1,1047.1,1441.3,1066.1,1442.4,1066.1C1443.6,1066.1,1444.7,1057.0,1445.9,1052.5C1447.0,1048.0,1448.1,1038.9,1449.3,1038.9C1450.4,1038.9,1451.6,1051.7,1452.7,1058.2C1453.9,1064.6,1455.0,1077.4,1456.1,1077.4C1457.3,1077.4,1458.4,1046.7,1459.6,1046.7C1460.7,1046.7,1461.9,1069.5,1463.0,1069.5C1464.1,1069.5,1465.3,1066.0,1466.4,1064.3C1467.6,1062.5,1468.7,1060.0,1469.9,1059.0C1471.0,1058.0,1472.1,1058.0,1473.3,1057.5C1474.4,1057.0,1475.6,1057.0,1476.7,1056.0C1477.9,1055.0,1479.0,1046.9,1480.1,1046.9C1481.3,1046.9,1482.4,1061.8,1483.6,1061.8C1484.7,1061.8,1485.9,1026.2,1487.0,1026.2C1488.1,1026.2,1489.3,1071.7,1490.4,1071.7C1491.6,1071.7,1492.7,1058.2,1493.9,1051.4C1495.0,1044.6,1496.1,1031.1,1497.3,1031.1C1498.4,1031.1,1499.6,1075.0,1500.7,1075.0C1501.9,1075.0,1503.0,1038.6,1504.1,1038.6C1505.3,1038.6,1506.4,1050.9,1507.6,1057.0C1508.7,1063.2,1509.9,1075.4,1511.0,1075.4C1512.1,1075.4,1513.3,1054.2,1514.4,1054.2C1515.6,1054.2,1516.7,1056.2,1517.9,1057.2C1519.0,1058.2,1520.1,1060.2,1521.3,1060.2C1522.4,1060.2,1523.6,1056.0,1524.7,1054.9C1525.9,1053.8,1527.0,1053.8,1528.1,1053.3C1529.3,1052.8,1530.4,1052.8,1531.6,1051.7C1532.7,1050.6,1533.9,1030.5,1535.0,1030.5C1536.1,1030.5,1537.3,1041.2,1538.4,1046.5C1539.6,1051.8,1540.7,1062.5,1541.9,1062.5C1543.0,1062.5,1544.1,928.3,1545.3,928.3C1546.4,928.3,1547.6,953.8,1548.7,966.6C1549.9,979.3,1551.0,992.1,1552.1,1004.8C1553.3,1017.5,1554.4,1034.5,1555.6,1043.0C1556.7,1051.6,1557.9,1051.7,1559.0,1056.1C1560.1,1060.5,1561.3,1069.2,1562.4,1069.2C1563.6,1069.2,1564.7,1044.9,1565.9,1044.9C1567.0,1044.9,1568.1,1046.1,1569.3,1046.7C1570.4,1047.3,1571.6,1048.0,1572.7,1048.5C1573.9,1049.0,1575.0,1049.4,1576.1,1049.8C1577.3,1050.2,1578.4,1050.2,1579.6,1051.0C1580.7,1051.9,1581.9,1058.2,1583.0,1061.8C1584.1,1065.4,1585.3,1072.6,1586.4,1072.6C1587.6,1072.6,1588.7,1036.8,1589.9,1036.8C1591.0,1036.8,1592.1,1067.3,1593.3,1067.3C1594.4,1067.3,1595.6,1024.4,1596.7,1024.4C1597.9,1024.4,1599.0,1052.0,1600.1,1052.0C1601.3,1052.0,1602.4,1042.6,1603.6,1037.9C1604.7,1033.2,1605.9,1023.8,1607.0,1023.8C1608.1,1023.8,1609.3,1051.7,1610.4,1051.7C1611.6,1051.7,1612.7,1035.4,1613.9,1035.4C1615.0,1035.4,1616.1,1075.1,1617.3,1075.1C1618.4,1075.1,1619.6,1027.4,1620.7,1027.4C1621.9,1027.4,1623.0,1037.6,1624.1,1042.7C1625.3,1047.8,1626.4,1058.0,1627.6,1058.0C1628.7,1058.0,1629.9,1009.8,1631.0,985.7C1632.1,961.6,1633.3,913.4,1634.4,913.4C1635.6,913.4,1636.7,955.6,1637.9,976.7C1639.0,997.8,1640.1,1036.6,1641.3,1039.9C1642.4,1043.3,1643.6,1043.3,1644.7,1045.0C1645.9,1046.7,1647.0,1050.1,1648.1,1050.1C1649.3,1050.1,1650.4,1031.7,1651.6,1031.7C1652.7,1031.7,1653.9,1038.5,1655.0,1041.9C1656.1,1045.3,1657.3,1049.4,1658.4,1052.0C1659.6,1054.6,1660.7,1057.4,1661.9,1057.4C1663.0,1057.4,1664.1,1054.9,1665.3,1051.5C1666.4,1048.2,1667.6,1042.0,1668.7,1037.2C1669.9,1032.4,1671.0,1022.9,1672.1,1022.9C1673.3,1022.9,1674.4,1078.5,1675.6,1078.5C1676.7,1078.5,1677.9,1068.3,1679.0,1063.2C1680.1,1058.1,1681.3,1047.9,1682.4,1047.9C1683.6,1047.9,1684.7,1051.5,1685.9,1053.3C1687.0,1055.1,1688.1,1058.7,1689.3,1058.7C1690.4,1058.7,1691.6,1050.7,1692.7,1050.7C1693.9,1050.7,1695.0,1072.0,1696.1,1072.0C1697.3,1072.0,1698.4,1058.1,1699.6,1051.1C1700.7,1044.1,1701.9,1030.2,1703.0,1030.2C1704.1,1030.2,1705.3,1078.7,1706.4,1078.7C1707.6,1078.7,1708.7,1033.6,1709.9,1011.0C1711.0,988.4,1712.1,943.3,1713.3,943.3C1714.4,943.3,1715.6,972.4,1716.7,986.9C1717.9,1001.5,1719.0,1016.0,1720.1,1030.6C1721.3,1045.1,1722.4,1074.2,1723.6,1074.2C1724.7,1074.2,1725.9,1051.8,1727.0,1051.8C1728.1,1051.8,1729.3,1063.0,1730.4,1063.0C1731.6,1063.0,1732.7,1038.1,1733.9,1025.6C1735.0,1013.1,1736.1,988.2,1737.3,988.2C1738.4,988.2,1739.6,1078.0,1740.7,1078.0C1741.9,1078.0,1743.0,1048.3,1744.1,1033.5C1745.3,1018.7,1746.4,1003.8,1747.6,989.0C1748.7,974.2,1749.9,944.5,1751.0,944.5C1752.1,944.5,1753.3,1075.5,1754.4,1075.5C1755.6,1075.5,1756.7,1050.5,1757.9,1050.5C1759.0,1050.5,1760.1,1075.5,1761.3,1075.5C1762.4,1075.5,1763.6,1054.3,1764.7,1054.3C1765.9,1054.3,1767.0,1058.0,1768.1,1058.0C1769.3,1058.0,1770.4,944.5,1771.6,944.5C1772.7,944.5,1773.9,1063.0,1775.0,1063.0C1776.1,1063.0,1777.3,968.2,1778.4,968.2C1779.6,968.2,1780.7,997.7,1781.9,1012.5C1783.0,1027.2,1784.1,1056.8,1785.3,1056.8C1786.4,1056.8,1787.6,984.4,1788.7,984.4C1789.9,984.4,1791.0,1063.0,1792.1,1063.0C1793.3,1063.0,1794.4,1050.5,1795.6,1050.5C1796.7,1050.5,1797.9,1063.0,1799.0,1063.0C1800.1,1063.0,1801.3,1050.5,1802.4,1050.5C1803.6,1050.5,1804.7,1061.7,1805.9,1061.7C1807.0,1061.7,1808.1,1059.7,1809.3,1058.6C1810.4,1057.6,1811.6,1055.5,1812.7,1055.5C1813.9,1055.5,1815.0,1076.7,1816.1,1076.7C1817.3,1076.7,1818.4,962.0,1819.6,962.0C1820.7,962.0,1821.9,985.5,1823.0,997.3C1824.1,1009.1,1825.3,1020.9,1826.4,1032.7C1827.6,1044.4,1828.7,1068.0,1829.9,1068.0C1831.0,1068.0,1832.1,1058.8,1833.3,1054.3C1834.4,1049.7,1835.6,1040.5,1836.7,1040.5C1837.9,1040.5,1839.0,1043.5,1840.1,1044.9C1841.3,1046.4,1842.4,1047.2,1843.6,1049.3C1844.7,1051.3,1845.9,1054.5,1847.0,1057.2C1848.1,1059.8,1849.3,1062.4,1850.4,1065.1C1851.6,1067.7,1852.7,1073.0,1853.9,1073.0C1855.0,1073.0,1856.1,1053.0,1857.3,1053.0C1858.4,1053.0,1859.6,1081.7,1860.7,1081.7C1861.9,1081.7,1863.0,1079.2,1864.1,1078.0C1865.3,1076.7,1866.4,1075.5,1867.6,1074.2C1868.7,1073.0,1869.9,1072.8,1871.0,1070.5C1872.1,1068.2,1873.3,1063.8,1874.4,1060.5C1875.6,1057.2,1876.7,1050.5,1877.9,1050.5C1879.0,1050.5,1880.1,1074.2,1881.3,1074.2C1882.4,1074.2,1883.6,1065.1,1884.7,1060.5C1885.9,1055.9,1887.0,1046.8,1888.1,1046.8C1889.3,1046.8,1890.4,1061.7,1891.6,1061.7C1892.7,1061.7,1893.9,932.1,1895.0,932.1C1896.1,932.1,1897.3,1074.2,1898.4,1074.2C1899.6,1074.2,1900.7,1059.3,1901.9,1059.3C1903.0,1059.3,1904.1,1071.7,1905.3,1071.7C1906.4,1071.7,1907.6,1064.2,1908.7,1060.5C1909.9,1056.8,1911.0,1049.3,1912.1,1049.3C1913.3,1049.3,1914.4,1058.0,1915.6,1058.0C1916.7,1058.0,1917.9,1050.5,1919.0,1050.5C1920.1,1050.5,1921.3,1076.7,1922.4,1076.7C1923.6,1076.7,1924.7,929.6,1925.9,929.6C1927.0,929.6,1928.1,1070.5,1929.3,1070.5C1930.4,1070.5,1931.6,1046.8,1932.7,1046.8C1933.9,1046.8,1935.0,1074.2,1936.1,1074.2C1937.3,1074.2,1938.4,1066.7,1939.6,1063.0C1940.7,1059.3,1941.9,1051.8,1943.0,1051.8C1944.1,1051.8,1945.3,1071.7,1946.4,1071.7C1947.6,1071.7,1948.7,1063.8,1949.9,1059.9C1951.0,1055.9,1952.1,1048.0,1953.3,1048.0C1954.4,1048.0,1955.6,1053.8,1956.7,1056.8C1957.9,1059.7,1959.0,1062.6,1960.1,1065.5C1961.3,1068.4,1962.4,1074.2,1963.6,1074.2C1964.7,1074.2,1965.9,943.3,1967.0,943.3C1968.1,943.3,1969.3,1078.0,1970.4,1078.0C1971.6,1078.0,1972.7,1068.0,1973.9,1068.0C1975.0,1068.0,1976.1,1070.9,1977.3,1072.3C1978.4,1073.8,1979.6,1076.7,1980.7,1076.7C1981.9,1076.7,1983.0,1025.6,1984.1,1025.6C1985.3,1025.6,1986.4,1046.8,1987.6,1046.8C1988.7,1046.8,1989.9,1043.5,1991.0,1041.8C1992.1,1040.1,1993.3,1036.8,1994.4,1036.8C1995.6,1036.8,1996.7,1050.9,1997.9,1058.0C1999.0,1065.1,2000.1,1079.2,2001.3,1079.2C2002.4,1079.2,2003.6,979.5,2004.7,979.5C2005.9,979.5,2007.0,1003.1,2008.1,1015.0C2009.3,1026.8,2010.4,1048.9,2011.6,1050.5C2012.7,1052.2,2013.9,1052.2,2015.0,1053.0C2016.1,1053.8,2017.3,1053.8,2018.4,1055.5C2019.6,1057.2,2020.7,1081.7,2021.9,1081.7C2023.0,1081.7,2024.1,1010.6,2025.3,1010.6C2026.4,1010.6,2027.6,1045.3,2028.7,1050.5C2029.9,1055.8,2031.0,1055.8,2032.1,1058.4C2033.3,1061.1,2034.4,1063.7,2035.6,1066.3C2036.7,1068.9,2037.9,1071.6,2039.0,1074.2L2039,1126L863,1126Z" fill="url(#gg)"/>
<path d="M863.0,889.7C864.1,871.0,865.3,852.3,866.4,852.3C867.6,852.3,868.7,886.8,869.9,904.0C871.0,921.3,872.1,955.8,873.3,955.8C874.4,955.8,875.6,932.9,876.7,921.5C877.9,910.0,879.0,887.2,880.1,887.2C881.3,887.2,882.4,912.1,883.6,912.1C884.7,912.1,885.9,885.9,887.0,885.9C888.1,885.9,889.3,899.7,890.4,899.7C891.6,899.7,892.7,891.1,893.9,886.8C895.0,882.5,896.1,878.2,897.3,873.9C898.4,869.6,899.6,861.0,900.7,861.0C901.9,861.0,903.0,916.3,904.1,943.9C905.3,971.6,906.4,1026.8,907.6,1026.8C908.7,1026.8,909.9,814.9,911.0,814.9C912.1,814.9,913.3,849.4,914.4,866.6C915.6,883.9,916.7,918.4,917.9,918.4C919.0,918.4,920.1,901.9,921.3,893.7C922.4,885.4,923.6,869.0,924.7,869.0C925.9,869.0,927.0,880.9,928.1,880.9C929.3,880.9,930.4,875.1,931.6,872.2C932.7,869.3,933.9,863.5,935.0,863.5C936.1,863.5,937.3,917.1,938.4,943.9C939.6,970.7,940.7,1024.3,941.9,1024.3C943.0,1024.3,944.1,825.3,945.3,825.3C946.4,825.3,947.6,933.3,948.7,933.3C949.9,933.3,951.0,828.6,952.1,828.6C953.3,828.6,954.4,1028.1,955.6,1028.1C956.7,1028.1,957.9,957.8,959.0,922.7C960.1,887.6,961.3,817.4,962.4,817.4C963.6,817.4,964.7,840.6,965.9,852.3C967.0,863.9,968.1,887.2,969.3,887.2C970.4,887.2,971.6,882.2,972.7,882.2C973.9,882.2,975.0,902.1,976.1,902.1C977.3,902.1,978.4,884.7,979.6,884.7C980.7,884.7,981.9,1013.1,983.0,1013.1C984.1,1013.1,985.3,973.6,986.4,953.9C987.6,934.1,988.7,894.7,989.9,894.7C991.0,894.7,992.1,1025.6,993.3,1025.6C994.4,1025.6,995.6,893.4,996.7,893.4C997.9,893.4,999.0,903.4,1000.1,903.4C1001.3,903.4,1002.4,897.2,1003.6,897.2C1004.7,897.2,1005.9,908.4,1007.0,908.4C1008.1,908.4,1009.3,896.3,1010.4,890.3C1011.6,884.3,1012.7,872.2,1013.9,872.2C1015.0,872.2,1016.1,938.7,1017.3,972.0C1018.4,1005.2,1019.6,1071.7,1020.7,1071.7C1021.9,1071.7,1023.0,885.9,1024.1,885.9C1025.3,885.9,1026.4,892.2,1027.6,895.3C1028.7,898.4,1029.9,904.6,1031.0,904.6C1032.1,904.6,1033.3,900.5,1034.4,898.4C1035.6,896.3,1036.7,892.2,1037.9,892.2C1039.0,892.2,1040.1,937.1,1041.3,937.1C1042.4,937.1,1043.6,894.7,1044.7,894.7C1045.9,894.7,1047.0,947.0,1048.1,947.0C1049.3,947.0,1050.4,880.9,1051.6,880.9C1052.7,880.9,1053.9,890.9,1055.0,890.9C1056.1,890.9,1057.3,888.4,1058.4,888.4C1059.6,888.4,1060.7,1021.8,1061.9,1021.8C1063.0,1021.8,1064.1,889.7,1065.3,889.7C1066.4,889.7,1067.6,923.3,1068.7,923.3C1069.9,923.3,1071.0,902.6,1072.1,892.2C1073.3,881.8,1074.4,861.0,1075.6,861.0C1076.7,861.0,1077.9,1021.8,1079.0,1021.8C1080.1,1021.8,1081.3,979.2,1082.4,957.8C1083.6,936.5,1084.7,915.2,1085.9,893.8C1087.0,872.5,1088.1,829.8,1089.3,829.8C1090.4,829.8,1091.6,848.1,1092.7,857.3C1093.9,866.4,1095.0,881.4,1096.1,884.7C1097.3,888.0,1098.4,888.0,1099.6,889.7C1100.7,891.3,1101.9,894.7,1103.0,894.7C1104.1,894.7,1105.3,890.9,1106.4,890.9C1107.6,890.9,1108.7,950.8,1109.9,950.8C1111.0,950.8,1112.1,939.1,1113.3,933.3C1114.4,927.5,1115.6,915.9,1116.7,915.9C1117.9,915.9,1119.0,949.9,1120.1,967.0C1121.3,984.0,1122.4,1018.1,1123.6,1018.1C1124.7,1018.1,1125.9,987.9,1127.0,972.8C1128.1,957.7,1129.3,942.6,1130.4,927.5C1131.6,912.4,1132.7,882.2,1133.9,882.2C1135.0,882.2,1136.1,962.0,1137.3,962.0C1138.4,962.0,1139.6,935.2,1140.7,921.8C1141.9,908.5,1143.0,881.7,1144.1,881.7C1145.3,881.7,1146.4,883.4,1147.6,883.4C1148.7,883.4,1149.9,879.2,1151.0,879.2C1152.1,879.2,1153.3,909.6,1154.4,909.6C1155.6,909.6,1156.7,891.3,1157.9,882.2C1159.0,873.1,1160.1,863.9,1161.3,854.8C1162.4,845.6,1163.6,827.3,1164.7,827.3C1165.9,827.3,1167.0,1046.8,1168.1,1046.8C1169.3,1046.8,1170.4,988.6,1171.6,959.5C1172.7,930.4,1173.9,872.2,1175.0,872.2C1176.1,872.2,1177.3,1026.8,1178.4,1026.8C1179.6,1026.8,1180.7,883.4,1181.9,883.4C1183.0,883.4,1184.1,1024.3,1185.3,1024.3C1186.4,1024.3,1187.6,968.2,1188.7,940.2C1189.9,912.1,1191.0,856.0,1192.1,856.0C1193.3,856.0,1194.4,885.9,1195.6,885.9C1196.7,885.9,1197.9,862.9,1199.0,851.4C1200.1,839.9,1201.3,816.9,1202.4,816.9C1203.6,816.9,1204.7,927.1,1205.9,927.1C1207.0,927.1,1208.1,868.5,1209.3,868.5C1210.4,868.5,1211.6,903.4,1212.7,903.4C1213.9,903.4,1215.0,893.4,1216.1,888.4C1217.3,883.4,1218.4,873.5,1219.6,873.5C1220.7,873.5,1221.9,900.9,1223.0,900.9C1224.1,900.9,1225.3,880.9,1226.4,880.9C1227.6,880.9,1228.7,953.3,1229.9,953.3C1231.0,953.3,1232.1,921.3,1233.3,905.3C1234.4,889.3,1235.6,857.3,1236.7,857.3C1237.9,857.3,1239.0,935.8,1240.1,935.8C1241.3,935.8,1242.4,825.3,1243.6,825.3C1244.7,825.3,1245.9,959.5,1247.0,959.5C1248.1,959.5,1249.3,933.7,1250.4,920.8C1251.6,908.0,1252.7,882.2,1253.9,882.2C1255.0,882.2,1256.1,927.1,1257.3,927.1C1258.4,927.1,1259.6,916.7,1260.7,911.5C1261.9,906.3,1263.0,895.9,1264.1,895.9C1265.3,895.9,1266.4,897.6,1267.6,898.4C1268.7,899.2,1269.9,900.9,1271.0,900.9C1272.1,900.9,1273.3,880.9,1274.4,880.9C1275.6,880.9,1276.7,938.3,1277.9,938.3C1279.0,938.3,1280.1,895.9,1281.3,895.9C1282.4,895.9,1283.6,925.8,1284.7,925.8C1285.9,925.8,1287.0,911.6,1288.1,911.6C1289.3,911.6,1290.4,915.9,1291.6,924.6C1292.7,933.2,1293.9,956.2,1295.0,972.0C1296.1,987.8,1297.3,1019.4,1298.4,1019.4C1299.6,1019.4,1300.7,937.9,1301.9,922.6C1303.0,907.3,1304.1,907.3,1305.3,899.7C1306.4,892.0,1307.6,876.7,1308.7,876.7C1309.9,876.7,1311.0,901.8,1312.1,914.4C1313.3,926.9,1314.4,952.0,1315.6,952.0C1316.7,952.0,1317.9,889.7,1319.0,889.7C1320.1,889.7,1321.3,890.1,1322.4,890.9C1323.6,891.8,1324.7,988.9,1325.9,988.9C1327.0,988.9,1328.1,955.8,1329.3,939.3C1330.4,922.8,1331.6,897.3,1332.7,889.7C1333.9,882.0,1335.0,882.0,1336.1,878.2C1337.3,874.4,1338.4,866.7,1339.6,866.7C1340.7,866.7,1341.9,979.9,1343.0,979.9C1344.1,979.9,1345.3,947.5,1346.4,931.3C1347.6,915.1,1348.7,882.7,1349.9,882.7C1351.0,882.7,1352.1,897.3,1353.3,904.6C1354.4,912.0,1355.6,926.6,1356.7,926.6C1357.9,926.6,1359.0,886.7,1360.1,886.7C1361.3,886.7,1362.4,886.8,1363.6,887.2C1364.7,887.5,1365.9,908.4,1367.0,908.4C1368.1,908.4,1369.3,894.2,1370.4,894.2C1371.6,894.2,1372.7,917.6,1373.9,917.6C1375.0,917.6,1376.1,882.7,1377.3,882.7C1378.4,882.7,1379.6,1006.1,1380.7,1006.1C1381.9,1006.1,1383.0,920.8,1384.1,920.8C1385.3,920.8,1386.4,975.8,1387.6,975.8C1388.7,975.8,1389.9,946.4,1391.0,931.7C1392.1,917.0,1393.3,887.7,1394.4,887.7C1395.6,887.7,1396.7,887.9,1397.9,888.4C1399.0,888.9,1400.1,903.4,1401.3,903.4C1402.4,903.4,1403.6,896.2,1404.7,892.6C1405.9,889.0,1407.0,885.4,1408.1,881.8C1409.3,878.2,1410.4,871.0,1411.6,871.0C1412.7,871.0,1413.9,1000.0,1415.0,1000.0C1416.1,1000.0,1417.3,952.9,1418.4,929.3C1419.6,905.7,1420.7,858.5,1421.9,858.5C1423.0,858.5,1424.1,991.1,1425.3,991.1C1426.4,991.1,1427.6,954.4,1428.7,936.0C1429.9,917.7,1431.0,880.9,1432.1,880.9C1433.3,880.9,1434.4,975.0,1435.6,975.0C1436.7,975.0,1437.9,952.7,1439.0,941.6C1440.1,930.4,1441.3,919.3,1442.4,908.1C1443.6,897.0,1444.7,874.7,1445.9,874.7C1447.0,874.7,1448.1,895.9,1449.3,895.9C1450.4,895.9,1451.6,892.2,1452.7,892.2C1453.9,892.2,1455.0,932.1,1456.1,932.1C1457.3,932.1,1458.4,890.9,1459.6,890.9C1460.7,890.9,1461.9,998.5,1463.0,998.5C1464.1,998.5,1465.3,960.5,1466.4,941.5C1467.6,922.4,1468.7,903.4,1469.9,884.4C1471.0,865.4,1472.1,827.3,1473.3,827.3C1474.4,827.3,1475.6,866.8,1476.7,886.6C1477.9,906.3,1479.0,945.8,1480.1,945.8C1481.3,945.8,1482.4,925.4,1483.6,915.2C1484.7,905.1,1485.9,884.7,1487.0,884.7C1488.1,884.7,1489.3,890.9,1490.4,890.9C1491.6,890.9,1492.7,890.5,1493.9,889.7C1495.0,888.8,1496.1,823.6,1497.3,823.6C1498.4,823.6,1499.6,949.5,1500.7,949.5C1501.9,949.5,1503.0,880.9,1504.1,880.9C1505.3,880.9,1506.4,950.8,1507.6,950.8C1508.7,950.8,1509.9,877.2,1511.0,877.2C1512.1,877.2,1513.3,922.1,1514.4,922.1C1515.6,922.1,1516.7,912.1,1517.9,912.1C1519.0,912.1,1520.1,973.9,1521.3,973.9C1522.4,973.9,1523.6,945.8,1524.7,931.8C1525.9,917.8,1527.0,889.7,1528.1,889.7C1529.3,889.7,1530.4,892.2,1531.6,892.2C1532.7,892.2,1533.9,889.7,1535.0,889.7C1536.1,889.7,1537.3,994.7,1538.4,994.7C1539.6,994.7,1540.7,876.0,1541.9,876.0C1543.0,876.0,1544.1,887.2,1545.3,887.2C1546.4,887.2,1547.6,884.7,1548.7,884.7C1549.9,884.7,1551.0,888.4,1552.1,890.3C1553.3,892.2,1554.4,892.2,1555.6,895.9C1556.7,899.7,1557.9,975.6,1559.0,975.6C1560.1,975.6,1561.3,893.4,1562.4,893.4C1563.6,893.4,1564.7,922.1,1565.9,922.1C1567.0,922.1,1568.1,827.3,1569.3,827.3C1570.4,827.3,1571.6,877.1,1572.7,902.0C1573.9,926.9,1575.0,976.7,1576.1,976.7C1577.3,976.7,1578.4,952.5,1579.6,940.4C1580.7,928.3,1581.9,916.2,1583.0,904.1C1584.1,892.0,1585.3,867.7,1586.4,867.7C1587.6,867.7,1588.7,887.1,1589.9,896.8C1591.0,906.5,1592.1,925.8,1593.3,925.8C1594.4,925.8,1595.6,895.9,1596.7,894.7C1597.9,893.4,1599.0,893.4,1600.1,892.8C1601.3,892.2,1602.4,890.9,1603.6,890.9C1604.7,890.9,1605.9,925.8,1607.0,925.8C1608.1,925.8,1609.3,895.9,1610.4,895.9C1611.6,895.9,1612.7,929.6,1613.9,929.6C1615.0,929.6,1616.1,915.0,1617.3,907.8C1618.4,900.5,1619.6,885.9,1620.7,885.9C1621.9,885.9,1623.0,994.2,1624.1,994.2C1625.3,994.2,1626.4,894.2,1627.6,893.4C1628.7,892.6,1629.9,893.0,1631.0,892.2C1632.1,891.3,1633.3,794.9,1634.4,794.9C1635.6,794.9,1636.7,1015.3,1637.9,1015.3C1639.0,1015.3,1640.1,899.7,1641.3,899.7C1642.4,899.7,1643.6,914.2,1644.7,921.5C1645.9,928.7,1647.0,943.3,1648.1,943.3C1649.3,943.3,1650.4,882.2,1651.6,882.2C1652.7,882.2,1653.9,883.4,1655.0,884.1C1656.1,884.7,1657.3,884.7,1658.4,885.9C1659.6,887.2,1660.7,978.5,1661.9,978.5C1663.0,978.5,1664.1,903.4,1665.3,903.4C1666.4,903.4,1667.6,983.7,1668.7,983.7C1669.9,983.7,1671.0,882.2,1672.1,882.2C1673.3,882.2,1674.4,1004.8,1675.6,1004.8C1676.7,1004.8,1677.9,969.8,1679.0,952.2C1680.1,934.7,1681.3,899.7,1682.4,899.7C1683.6,899.7,1684.7,915.4,1685.9,923.3C1687.0,931.2,1688.1,947.0,1689.3,947.0C1690.4,947.0,1691.6,910.9,1692.7,910.9C1693.9,910.9,1695.0,944.5,1696.1,944.5C1697.3,944.5,1698.4,905.3,1699.6,885.7C1700.7,866.1,1701.9,826.8,1703.0,826.8C1704.1,826.8,1705.3,919.6,1706.4,919.6C1707.6,919.6,1708.7,903.0,1709.9,894.7C1711.0,886.4,1712.1,869.7,1713.3,869.7C1714.4,869.7,1715.6,1021.6,1716.7,1021.6C1717.9,1021.6,1719.0,972.2,1720.1,947.5C1721.3,922.8,1722.4,873.5,1723.6,873.5C1724.7,873.5,1725.9,880.9,1727.0,884.7C1728.1,888.4,1729.3,895.9,1730.4,895.9C1731.6,895.9,1732.7,890.9,1733.9,890.9C1735.0,890.9,1736.1,923.3,1737.3,923.3C1738.4,923.3,1739.6,890.9,1740.7,890.9C1741.9,890.9,1743.0,891.3,1744.1,892.2C1745.3,893.0,1746.4,912.1,1747.6,912.1C1748.7,912.1,1749.9,832.8,1751.0,832.8C1752.1,832.8,1753.3,865.5,1754.4,881.8C1755.6,898.2,1756.7,930.8,1757.9,930.8C1759.0,930.8,1760.1,889.7,1761.3,889.7C1762.4,889.7,1763.6,925.8,1764.7,943.9C1765.9,962.0,1767.0,998.2,1768.1,998.2C1769.3,998.2,1770.4,887.2,1771.6,887.2C1772.7,887.2,1773.9,922.1,1775.0,922.1C1776.1,922.1,1777.3,912.1,1778.4,907.1C1779.6,902.1,1780.7,892.2,1781.9,892.2C1783.0,892.2,1784.1,908.4,1785.3,908.4C1786.4,908.4,1787.6,828.6,1788.7,828.6C1789.9,828.6,1791.0,1018.1,1792.1,1018.1C1793.3,1018.1,1794.4,887.2,1795.6,887.2C1796.7,887.2,1797.9,913.8,1799.0,927.1C1800.1,940.4,1801.3,953.7,1802.4,967.0C1803.6,980.3,1804.7,1006.9,1805.9,1006.9C1807.0,1006.9,1808.1,899.7,1809.3,899.7C1810.4,899.7,1811.6,899.7,1812.7,899.7C1813.9,899.7,1815.0,882.2,1816.1,882.2C1817.3,882.2,1818.4,882.2,1819.6,882.2C1820.7,882.2,1821.9,878.5,1823.0,878.5C1824.1,878.5,1825.3,934.6,1826.4,934.6C1827.6,934.6,1828.7,888.4,1829.9,888.4C1831.0,888.4,1832.1,888.8,1833.3,889.7C1834.4,890.5,1835.6,907.1,1836.7,907.1C1837.9,907.1,1839.0,880.9,1840.1,880.9C1841.3,880.9,1842.4,904.6,1843.6,904.6C1844.7,904.6,1845.9,811.9,1847.0,811.9C1848.1,811.9,1849.3,889.7,1850.4,889.7C1851.6,889.7,1852.7,879.7,1853.9,879.7C1855.0,879.7,1856.1,880.1,1857.3,880.9C1858.4,881.8,1859.6,928.3,1860.7,952.0C1861.9,975.7,1863.0,1023.1,1864.1,1023.1C1865.3,1023.1,1866.4,960.3,1867.6,929.0C1868.7,897.6,1869.9,834.8,1871.0,834.8C1872.1,834.8,1873.3,902.1,1874.4,902.1C1875.6,902.1,1876.7,878.5,1877.9,878.5C1879.0,878.5,1880.1,1025.6,1881.3,1025.6C1882.4,1025.6,1883.6,977.4,1884.7,953.3C1885.9,929.2,1887.0,880.9,1888.1,880.9C1889.3,880.9,1890.4,1006.9,1891.6,1006.9C1892.7,1006.9,1893.9,887.2,1895.0,887.2C1896.1,887.2,1897.3,899.7,1898.4,899.7C1899.6,899.7,1900.7,897.6,1901.9,893.4C1903.0,889.3,1904.1,857.3,1905.3,857.3C1906.4,857.3,1907.6,898.4,1908.7,898.4C1909.9,898.4,1911.0,834.8,1912.1,834.8C1913.3,834.8,1914.4,930.8,1915.6,930.8C1916.7,930.8,1917.9,897.2,1919.0,897.2C1920.1,897.2,1921.3,909.6,1922.4,909.6C1923.6,909.6,1924.7,900.6,1925.9,896.2C1927.0,891.7,1928.1,882.7,1929.3,882.7C1930.4,882.7,1931.6,923.3,1932.7,923.3C1933.9,923.3,1935.0,914.2,1936.1,909.6C1937.3,905.1,1938.4,900.5,1939.6,895.9C1940.7,891.3,1941.9,882.2,1943.0,882.2C1944.1,882.2,1945.3,913.4,1946.4,913.4C1947.6,913.4,1948.7,886.4,1949.9,884.7C1951.0,883.0,1952.1,883.9,1953.3,882.2C1954.4,880.5,1955.6,854.8,1956.7,854.8C1957.9,854.8,1959.0,908.8,1960.1,935.8C1961.3,962.8,1962.4,1016.9,1963.6,1016.9C1964.7,1016.9,1965.9,884.7,1967.0,884.7C1968.1,884.7,1969.3,1014.4,1970.4,1014.4C1971.6,1014.4,1972.7,885.9,1973.9,885.9C1975.0,885.9,1976.1,1026.8,1977.3,1026.8C1978.4,1026.8,1979.6,996.4,1980.7,981.1C1981.9,965.9,1983.0,950.6,1984.1,935.4C1985.3,920.2,1986.4,889.7,1987.6,889.7C1988.7,889.7,1989.9,890.9,1991.0,890.9C1992.1,890.9,1993.3,880.9,1994.4,880.9C1995.6,880.9,1996.7,912.5,1997.9,928.3C1999.0,944.1,2000.1,975.7,2001.3,975.7C2002.4,975.7,2003.6,891.1,2004.7,864.7C2005.9,838.3,2007.0,833.2,2008.1,817.4C2009.3,801.6,2010.4,770.0,2011.6,770.0C2012.7,770.0,2013.9,895.1,2015.0,898.4C2016.1,901.7,2017.3,901.7,2018.4,903.4C2019.6,905.1,2020.7,908.4,2021.9,908.4C2023.0,908.4,2024.1,784.9,2025.3,784.9C2026.4,784.9,2027.6,812.0,2028.7,825.5C2029.9,839.0,2031.0,843.9,2032.1,866.0C2033.3,888.1,2034.4,958.3,2035.6,958.3C2036.7,958.3,2037.9,940.2,2039.0,922.1" fill="none" stroke="#fa9d05" stroke-width="2.2" stroke-linejoin="round"/>
<path d="M863.0,1048.0C864.1,1046.2,865.3,1044.3,866.4,1044.3C867.6,1044.3,868.7,1055.9,869.9,1061.7C871.0,1067.6,872.1,1079.2,873.3,1079.2C874.4,1079.2,875.6,1069.6,876.7,1064.9C877.9,1060.1,879.0,1050.5,880.1,1050.5C881.3,1050.5,882.4,1052.6,883.6,1053.6C884.7,1054.7,885.9,1056.8,887.0,1056.8C888.1,1056.8,889.3,1036.8,890.4,1036.8C891.6,1036.8,892.7,1050.5,893.9,1050.5C895.0,1050.5,896.1,1050.1,897.3,1049.9C898.4,1049.7,899.6,1049.3,900.7,1049.3C901.9,1049.3,903.0,1059.7,904.1,1064.9C905.3,1070.1,906.4,1080.4,907.6,1080.4C908.7,1080.4,909.9,1063.0,911.0,1063.0C912.1,1063.0,913.3,1069.2,914.4,1069.2C915.6,1069.2,916.7,1055.5,917.9,1055.5C919.0,1055.5,920.1,1069.2,921.3,1069.2C922.4,1069.2,923.6,1024.3,924.7,1001.9C925.9,979.5,927.0,934.6,928.1,934.6C929.3,934.6,930.4,1056.8,931.6,1056.8C932.7,1056.8,933.9,1049.3,935.0,1049.3C936.1,1049.3,937.3,1050.5,938.4,1051.1C939.6,1051.8,940.7,1053.0,941.9,1053.0C943.0,1053.0,944.1,991.9,945.3,991.9C946.4,991.9,947.6,1049.3,948.7,1049.3C949.9,1049.3,951.0,929.6,952.1,929.6C953.3,929.6,954.4,1078.0,955.6,1078.0C956.7,1078.0,957.9,1048.4,959.0,1033.7C960.1,1018.9,961.3,989.4,962.4,989.4C963.6,989.4,964.7,1017.7,965.9,1031.8C967.0,1046.0,968.1,1074.2,969.3,1074.2C970.4,1074.2,971.6,989.4,972.7,989.4C973.9,989.4,975.0,1078.0,976.1,1078.0C977.3,1078.0,978.4,1046.8,979.6,1046.8C980.7,1046.8,981.9,1059.3,983.0,1059.3C984.1,1059.3,985.3,1057.6,986.4,1056.8C987.6,1055.9,988.7,1054.3,989.9,1054.3C991.0,1054.3,992.1,1058.0,993.3,1058.0C994.4,1058.0,995.6,1041.8,996.7,1041.8C997.9,1041.8,999.0,1051.8,1000.1,1056.8C1001.3,1061.7,1002.4,1071.7,1003.6,1071.7C1004.7,1071.7,1005.9,989.4,1007.0,989.4C1008.1,989.4,1009.3,1018.1,1010.4,1032.4C1011.6,1046.8,1012.7,1075.5,1013.9,1075.5C1015.0,1075.5,1016.1,990.7,1017.3,990.7C1018.4,990.7,1019.6,1091.7,1020.7,1091.7C1021.9,1091.7,1023.0,1064.8,1024.1,1051.4C1025.3,1037.9,1026.4,1024.5,1027.6,1011.0C1028.7,997.6,1029.9,970.7,1031.0,970.7C1032.1,970.7,1033.3,1073.0,1034.4,1073.0C1035.6,1073.0,1036.7,1063.0,1037.9,1063.0C1039.0,1063.0,1040.1,1073.0,1041.3,1073.0C1042.4,1073.0,1043.6,991.9,1044.7,991.9C1045.9,991.9,1047.0,1059.3,1048.1,1059.3C1049.3,1059.3,1050.4,948.3,1051.6,948.3C1052.7,948.3,1053.9,1081.7,1055.0,1081.7C1056.1,1081.7,1057.3,985.7,1058.4,985.7C1059.6,985.7,1060.7,1089.2,1061.9,1089.2C1063.0,1089.2,1064.1,947.0,1065.3,947.0C1066.4,947.0,1067.6,1053.0,1068.7,1053.0C1069.9,1053.0,1071.0,965.0,1072.1,965.0C1073.3,965.0,1074.4,1003.5,1075.6,1022.7C1076.7,1042.0,1077.9,1080.4,1079.0,1080.4C1080.1,1080.4,1081.3,1072.6,1082.4,1068.6C1083.6,1064.7,1084.7,1064.7,1085.9,1056.8C1087.0,1048.9,1088.1,928.3,1089.3,928.3C1090.4,928.3,1091.6,1029.3,1092.7,1029.3C1093.9,1029.3,1095.0,984.4,1096.1,984.4C1097.3,984.4,1098.4,1016.0,1099.6,1031.8C1100.7,1047.6,1101.9,1079.2,1103.0,1079.2C1104.1,1079.2,1105.3,990.7,1106.4,990.7C1107.6,990.7,1108.7,1076.7,1109.9,1076.7C1111.0,1076.7,1112.1,988.2,1113.3,988.2C1114.4,988.2,1115.6,1078.0,1116.7,1078.0C1117.9,1078.0,1119.0,1068.8,1120.1,1064.2C1121.3,1059.7,1122.4,1050.5,1123.6,1050.5C1124.7,1050.5,1125.9,1064.2,1127.0,1064.2C1128.1,1064.2,1129.3,1058.0,1130.4,1054.9C1131.6,1051.8,1132.7,1045.5,1133.9,1045.5C1135.0,1045.5,1136.1,1051.4,1137.3,1054.3C1138.4,1057.2,1139.6,1063.0,1140.7,1063.0C1141.9,1063.0,1143.0,1030.2,1144.1,1013.7C1145.3,997.3,1146.4,964.5,1147.6,964.5C1148.7,964.5,1149.9,1001.9,1151.0,1020.6C1152.1,1039.3,1153.3,1076.7,1154.4,1076.7C1155.6,1076.7,1156.7,1062.6,1157.9,1055.5C1159.0,1048.4,1160.1,1034.3,1161.3,1034.3C1162.4,1034.3,1163.6,1050.5,1164.7,1058.6C1165.9,1066.7,1167.0,1082.9,1168.1,1082.9C1169.3,1082.9,1170.4,1034.7,1171.6,1010.6C1172.7,986.5,1173.9,938.3,1175.0,938.3C1176.1,938.3,1177.3,1051.8,1178.4,1051.8C1179.6,1051.8,1180.7,1031.8,1181.9,1031.8C1183.0,1031.8,1184.1,1073.0,1185.3,1073.0C1186.4,1073.0,1187.6,1060.9,1188.7,1054.9C1189.9,1048.9,1191.0,1036.8,1192.1,1036.8C1193.3,1036.8,1194.4,1056.8,1195.6,1056.8C1196.7,1056.8,1197.9,1049.3,1199.0,1049.3C1200.1,1049.3,1201.3,1049.7,1202.4,1050.5C1203.6,1051.4,1204.7,1073.0,1205.9,1073.0C1207.0,1073.0,1208.1,1043.9,1209.3,1029.3C1210.4,1014.8,1211.6,985.7,1212.7,985.7C1213.9,985.7,1215.0,1051.8,1216.1,1051.8C1217.3,1051.8,1218.4,989.4,1219.6,989.4C1220.7,989.4,1221.9,1078.0,1223.0,1078.0C1224.1,1078.0,1225.3,1048.0,1226.4,1048.0C1227.6,1048.0,1228.7,1050.5,1229.9,1050.5C1231.0,1050.5,1232.1,1035.6,1233.3,1035.6C1234.4,1035.6,1235.6,1046.8,1236.7,1046.8C1237.9,1046.8,1239.0,1045.5,1240.1,1045.5C1241.3,1045.5,1242.4,1054.3,1243.6,1054.3C1244.7,1054.3,1245.9,1050.5,1247.0,1048.7C1248.1,1046.8,1249.3,1046.8,1250.4,1043.0C1251.6,1039.3,1252.7,981.4,1253.9,981.4C1255.0,981.4,1256.1,1058.0,1257.3,1058.0C1258.4,1058.0,1259.6,1030.6,1260.7,1030.6C1261.9,1030.6,1263.0,1068.0,1264.1,1068.0C1265.3,1068.0,1266.4,1062.6,1267.6,1059.9C1268.7,1057.2,1269.9,1051.8,1271.0,1051.8C1272.1,1051.8,1273.3,1055.9,1274.4,1058.0C1275.6,1060.1,1276.7,1062.2,1277.9,1064.2C1279.0,1066.3,1280.1,1070.5,1281.3,1070.5C1282.4,1070.5,1283.6,1050.5,1284.7,1050.5C1285.9,1050.5,1287.0,1059.7,1288.1,1064.2C1289.3,1068.8,1290.4,1078.0,1291.6,1078.0C1292.7,1078.0,1293.9,1056.8,1295.0,1056.8C1296.1,1056.8,1297.3,1056.9,1298.4,1057.0C1299.6,1057.1,1300.7,1057.3,1301.9,1057.3C1303.0,1057.3,1304.1,1053.8,1305.3,1046.8C1306.4,1039.8,1307.6,960.7,1308.7,960.7C1309.9,960.7,1311.0,996.9,1312.1,1015.0C1313.3,1033.1,1314.4,1069.2,1315.6,1069.2C1316.7,1069.2,1317.9,1041.0,1319.0,1026.8C1320.1,1012.7,1321.3,984.4,1322.4,984.4C1323.6,984.4,1324.7,1059.6,1325.9,1059.6C1327.0,1059.6,1328.1,1051.6,1329.3,1047.6C1330.4,1043.6,1331.6,1039.6,1332.7,1035.6C1333.9,1031.6,1335.0,1023.6,1336.1,1023.6C1337.3,1023.6,1338.4,1056.2,1339.6,1056.2C1340.7,1056.2,1341.9,1046.2,1343.0,1041.2C1344.1,1036.2,1345.3,1026.3,1346.4,1026.3C1347.6,1026.3,1348.7,1073.2,1349.9,1073.2C1351.0,1073.2,1352.1,1043.6,1353.3,1043.6C1354.4,1043.6,1355.6,1048.7,1356.7,1051.2C1357.9,1053.8,1359.0,1058.9,1360.1,1058.9C1361.3,1058.9,1362.4,1024.2,1363.6,1024.2C1364.7,1024.2,1365.9,1053.5,1367.0,1053.5C1368.1,1053.5,1369.3,1048.3,1370.4,1045.7C1371.6,1043.0,1372.7,1037.8,1373.9,1037.8C1375.0,1037.8,1376.1,1065.8,1377.3,1065.8C1378.4,1065.8,1379.6,1054.9,1380.7,1049.4C1381.9,1044.0,1383.0,1033.1,1384.1,1033.1C1385.3,1033.1,1386.4,1045.2,1387.6,1051.3C1388.7,1057.3,1389.9,1069.4,1391.0,1069.4C1392.1,1069.4,1393.3,1043.3,1394.4,1043.3C1395.6,1043.3,1396.7,1075.2,1397.9,1075.2C1399.0,1075.2,1400.1,1061.0,1401.3,1053.9C1402.4,1046.8,1403.6,1043.9,1404.7,1032.6C1405.9,1021.3,1407.0,1001.6,1408.1,986.1C1409.3,970.6,1410.4,939.6,1411.6,939.6C1412.7,939.6,1413.9,976.4,1415.0,994.9C1416.1,1013.3,1417.3,1041.9,1418.4,1050.2C1419.6,1058.5,1420.7,1062.6,1421.9,1062.6C1423.0,1062.6,1424.1,1057.4,1425.3,1046.8C1426.4,1036.3,1427.6,1009.8,1428.7,991.3C1429.9,972.8,1431.0,935.8,1432.1,935.8C1433.3,935.8,1434.4,968.4,1435.6,984.7C1436.7,1001.0,1437.9,1020.0,1439.0,1033.6C1440.1,1047.1,1441.3,1066.1,1442.4,1066.1C1443.6,1066.1,1444.7,1057.0,1445.9,1052.5C1447.0,1048.0,1448.1,1038.9,1449.3,1038.9C1450.4,1038.9,1451.6,1051.7,1452.7,1058.2C1453.9,1064.6,1455.0,1077.4,1456.1,1077.4C1457.3,1077.4,1458.4,1046.7,1459.6,1046.7C1460.7,1046.7,1461.9,1069.5,1463.0,1069.5C1464.1,1069.5,1465.3,1066.0,1466.4,1064.3C1467.6,1062.5,1468.7,1060.0,1469.9,1059.0C1471.0,1058.0,1472.1,1058.0,1473.3,1057.5C1474.4,1057.0,1475.6,1057.0,1476.7,1056.0C1477.9,1055.0,1479.0,1046.9,1480.1,1046.9C1481.3,1046.9,1482.4,1061.8,1483.6,1061.8C1484.7,1061.8,1485.9,1026.2,1487.0,1026.2C1488.1,1026.2,1489.3,1071.7,1490.4,1071.7C1491.6,1071.7,1492.7,1058.2,1493.9,1051.4C1495.0,1044.6,1496.1,1031.1,1497.3,1031.1C1498.4,1031.1,1499.6,1075.0,1500.7,1075.0C1501.9,1075.0,1503.0,1038.6,1504.1,1038.6C1505.3,1038.6,1506.4,1050.9,1507.6,1057.0C1508.7,1063.2,1509.9,1075.4,1511.0,1075.4C1512.1,1075.4,1513.3,1054.2,1514.4,1054.2C1515.6,1054.2,1516.7,1056.2,1517.9,1057.2C1519.0,1058.2,1520.1,1060.2,1521.3,1060.2C1522.4,1060.2,1523.6,1056.0,1524.7,1054.9C1525.9,1053.8,1527.0,1053.8,1528.1,1053.3C1529.3,1052.8,1530.4,1052.8,1531.6,1051.7C1532.7,1050.6,1533.9,1030.5,1535.0,1030.5C1536.1,1030.5,1537.3,1041.2,1538.4,1046.5C1539.6,1051.8,1540.7,1062.5,1541.9,1062.5C1543.0,1062.5,1544.1,928.3,1545.3,928.3C1546.4,928.3,1547.6,953.8,1548.7,966.6C1549.9,979.3,1551.0,992.1,1552.1,1004.8C1553.3,1017.5,1554.4,1034.5,1555.6,1043.0C1556.7,1051.6,1557.9,1051.7,1559.0,1056.1C1560.1,1060.5,1561.3,1069.2,1562.4,1069.2C1563.6,1069.2,1564.7,1044.9,1565.9,1044.9C1567.0,1044.9,1568.1,1046.1,1569.3,1046.7C1570.4,1047.3,1571.6,1048.0,1572.7,1048.5C1573.9,1049.0,1575.0,1049.4,1576.1,1049.8C1577.3,1050.2,1578.4,1050.2,1579.6,1051.0C1580.7,1051.9,1581.9,1058.2,1583.0,1061.8C1584.1,1065.4,1585.3,1072.6,1586.4,1072.6C1587.6,1072.6,1588.7,1036.8,1589.9,1036.8C1591.0,1036.8,1592.1,1067.3,1593.3,1067.3C1594.4,1067.3,1595.6,1024.4,1596.7,1024.4C1597.9,1024.4,1599.0,1052.0,1600.1,1052.0C1601.3,1052.0,1602.4,1042.6,1603.6,1037.9C1604.7,1033.2,1605.9,1023.8,1607.0,1023.8C1608.1,1023.8,1609.3,1051.7,1610.4,1051.7C1611.6,1051.7,1612.7,1035.4,1613.9,1035.4C1615.0,1035.4,1616.1,1075.1,1617.3,1075.1C1618.4,1075.1,1619.6,1027.4,1620.7,1027.4C1621.9,1027.4,1623.0,1037.6,1624.1,1042.7C1625.3,1047.8,1626.4,1058.0,1627.6,1058.0C1628.7,1058.0,1629.9,1009.8,1631.0,985.7C1632.1,961.6,1633.3,913.4,1634.4,913.4C1635.6,913.4,1636.7,955.6,1637.9,976.7C1639.0,997.8,1640.1,1036.6,1641.3,1039.9C1642.4,1043.3,1643.6,1043.3,1644.7,1045.0C1645.9,1046.7,1647.0,1050.1,1648.1,1050.1C1649.3,1050.1,1650.4,1031.7,1651.6,1031.7C1652.7,1031.7,1653.9,1038.5,1655.0,1041.9C1656.1,1045.3,1657.3,1049.4,1658.4,1052.0C1659.6,1054.6,1660.7,1057.4,1661.9,1057.4C1663.0,1057.4,1664.1,1054.9,1665.3,1051.5C1666.4,1048.2,1667.6,1042.0,1668.7,1037.2C1669.9,1032.4,1671.0,1022.9,1672.1,1022.9C1673.3,1022.9,1674.4,1078.5,1675.6,1078.5C1676.7,1078.5,1677.9,1068.3,1679.0,1063.2C1680.1,1058.1,1681.3,1047.9,1682.4,1047.9C1683.6,1047.9,1684.7,1051.5,1685.9,1053.3C1687.0,1055.1,1688.1,1058.7,1689.3,1058.7C1690.4,1058.7,1691.6,1050.7,1692.7,1050.7C1693.9,1050.7,1695.0,1072.0,1696.1,1072.0C1697.3,1072.0,1698.4,1058.1,1699.6,1051.1C1700.7,1044.1,1701.9,1030.2,1703.0,1030.2C1704.1,1030.2,1705.3,1078.7,1706.4,1078.7C1707.6,1078.7,1708.7,1033.6,1709.9,1011.0C1711.0,988.4,1712.1,943.3,1713.3,943.3C1714.4,943.3,1715.6,972.4,1716.7,986.9C1717.9,1001.5,1719.0,1016.0,1720.1,1030.6C1721.3,1045.1,1722.4,1074.2,1723.6,1074.2C1724.7,1074.2,1725.9,1051.8,1727.0,1051.8C1728.1,1051.8,1729.3,1063.0,1730.4,1063.0C1731.6,1063.0,1732.7,1038.1,1733.9,1025.6C1735.0,1013.1,1736.1,988.2,1737.3,988.2C1738.4,988.2,1739.6,1078.0,1740.7,1078.0C1741.9,1078.0,1743.0,1048.3,1744.1,1033.5C1745.3,1018.7,1746.4,1003.8,1747.6,989.0C1748.7,974.2,1749.9,944.5,1751.0,944.5C1752.1,944.5,1753.3,1075.5,1754.4,1075.5C1755.6,1075.5,1756.7,1050.5,1757.9,1050.5C1759.0,1050.5,1760.1,1075.5,1761.3,1075.5C1762.4,1075.5,1763.6,1054.3,1764.7,1054.3C1765.9,1054.3,1767.0,1058.0,1768.1,1058.0C1769.3,1058.0,1770.4,944.5,1771.6,944.5C1772.7,944.5,1773.9,1063.0,1775.0,1063.0C1776.1,1063.0,1777.3,968.2,1778.4,968.2C1779.6,968.2,1780.7,997.7,1781.9,1012.5C1783.0,1027.2,1784.1,1056.8,1785.3,1056.8C1786.4,1056.8,1787.6,984.4,1788.7,984.4C1789.9,984.4,1791.0,1063.0,1792.1,1063.0C1793.3,1063.0,1794.4,1050.5,1795.6,1050.5C1796.7,1050.5,1797.9,1063.0,1799.0,1063.0C1800.1,1063.0,1801.3,1050.5,1802.4,1050.5C1803.6,1050.5,1804.7,1061.7,1805.9,1061.7C1807.0,1061.7,1808.1,1059.7,1809.3,1058.6C1810.4,1057.6,1811.6,1055.5,1812.7,1055.5C1813.9,1055.5,1815.0,1076.7,1816.1,1076.7C1817.3,1076.7,1818.4,962.0,1819.6,962.0C1820.7,962.0,1821.9,985.5,1823.0,997.3C1824.1,1009.1,1825.3,1020.9,1826.4,1032.7C1827.6,1044.4,1828.7,1068.0,1829.9,1068.0C1831.0,1068.0,1832.1,1058.8,1833.3,1054.3C1834.4,1049.7,1835.6,1040.5,1836.7,1040.5C1837.9,1040.5,1839.0,1043.5,1840.1,1044.9C1841.3,1046.4,1842.4,1047.2,1843.6,1049.3C1844.7,1051.3,1845.9,1054.5,1847.0,1057.2C1848.1,1059.8,1849.3,1062.4,1850.4,1065.1C1851.6,1067.7,1852.7,1073.0,1853.9,1073.0C1855.0,1073.0,1856.1,1053.0,1857.3,1053.0C1858.4,1053.0,1859.6,1081.7,1860.7,1081.7C1861.9,1081.7,1863.0,1079.2,1864.1,1078.0C1865.3,1076.7,1866.4,1075.5,1867.6,1074.2C1868.7,1073.0,1869.9,1072.8,1871.0,1070.5C1872.1,1068.2,1873.3,1063.8,1874.4,1060.5C1875.6,1057.2,1876.7,1050.5,1877.9,1050.5C1879.0,1050.5,1880.1,1074.2,1881.3,1074.2C1882.4,1074.2,1883.6,1065.1,1884.7,1060.5C1885.9,1055.9,1887.0,1046.8,1888.1,1046.8C1889.3,1046.8,1890.4,1061.7,1891.6,1061.7C1892.7,1061.7,1893.9,932.1,1895.0,932.1C1896.1,932.1,1897.3,1074.2,1898.4,1074.2C1899.6,1074.2,1900.7,1059.3,1901.9,1059.3C1903.0,1059.3,1904.1,1071.7,1905.3,1071.7C1906.4,1071.7,1907.6,1064.2,1908.7,1060.5C1909.9,1056.8,1911.0,1049.3,1912.1,1049.3C1913.3,1049.3,1914.4,1058.0,1915.6,1058.0C1916.7,1058.0,1917.9,1050.5,1919.0,1050.5C1920.1,1050.5,1921.3,1076.7,1922.4,1076.7C1923.6,1076.7,1924.7,929.6,1925.9,929.6C1927.0,929.6,1928.1,1070.5,1929.3,1070.5C1930.4,1070.5,1931.6,1046.8,1932.7,1046.8C1933.9,1046.8,1935.0,1074.2,1936.1,1074.2C1937.3,1074.2,1938.4,1066.7,1939.6,1063.0C1940.7,1059.3,1941.9,1051.8,1943.0,1051.8C1944.1,1051.8,1945.3,1071.7,1946.4,1071.7C1947.6,1071.7,1948.7,1063.8,1949.9,1059.9C1951.0,1055.9,1952.1,1048.0,1953.3,1048.0C1954.4,1048.0,1955.6,1053.8,1956.7,1056.8C1957.9,1059.7,1959.0,1062.6,1960.1,1065.5C1961.3,1068.4,1962.4,1074.2,1963.6,1074.2C1964.7,1074.2,1965.9,943.3,1967.0,943.3C1968.1,943.3,1969.3,1078.0,1970.4,1078.0C1971.6,1078.0,1972.7,1068.0,1973.9,1068.0C1975.0,1068.0,1976.1,1070.9,1977.3,1072.3C1978.4,1073.8,1979.6,1076.7,1980.7,1076.7C1981.9,1076.7,1983.0,1025.6,1984.1,1025.6C1985.3,1025.6,1986.4,1046.8,1987.6,1046.8C1988.7,1046.8,1989.9,1043.5,1991.0,1041.8C1992.1,1040.1,1993.3,1036.8,1994.4,1036.8C1995.6,1036.8,1996.7,1050.9,1997.9,1058.0C1999.0,1065.1,2000.1,1079.2,2001.3,1079.2C2002.4,1079.2,2003.6,979.5,2004.7,979.5C2005.9,979.5,2007.0,1003.1,2008.1,1015.0C2009.3,1026.8,2010.4,1048.9,2011.6,1050.5C2012.7,1052.2,2013.9,1052.2,2015.0,1053.0C2016.1,1053.8,2017.3,1053.8,2018.4,1055.5C2019.6,1057.2,2020.7,1081.7,2021.9,1081.7C2023.0,1081.7,2024.1,1010.6,2025.3,1010.6C2026.4,1010.6,2027.6,1045.3,2028.7,1050.5C2029.9,1055.8,2031.0,1055.8,2032.1,1058.4C2033.3,1061.1,2034.4,1063.7,2035.6,1066.3C2036.7,1068.9,2037.9,1071.6,2039.0,1074.2" fill="none" stroke="#12c487" stroke-width="2.2" stroke-linejoin="round"/>
</g>
<line x1="863" y1="1126" x2="2040" y2="1126" stroke="#7a7a7a" stroke-width="2"/>
<line x1="1089" y1="1126" x2="1089" y2="1137" stroke="#7a7a7a" stroke-width="2"/>
<line x1="1398" y1="1126" x2="1398" y2="1137" stroke="#7a7a7a" stroke-width="2"/>
<line x1="1706" y1="1126" x2="1706" y2="1137" stroke="#7a7a7a" stroke-width="2"/>
<line x1="2039" y1="1126" x2="2039" y2="1137" stroke="#7a7a7a" stroke-width="2"/>
<circle cx="1301.8" cy="922.5" r="7.5" fill="#fa9b02"/>
<circle cx="1301.8" cy="1057.8" r="7.5" fill="#10b981"/>
</svg>

<div class="t s" style="left:2067px;top:758.5px;font-size:24px;color:#a3a3a3">434ms</div>
<div class="t s" style="left:2067px;top:992px;font-size:24px;color:#a3a3a3">150ms</div>
<div class="t s" style="left:2067px;top:1114.6px;font-size:24px;color:#a3a3a3">0ms</div>
<div class="t s" style="left:951px;top:1141px;font-size:23px;color:#a3a3a3">Nov 16 at 2:30 AM GMT+1</div>
<div class="t s" style="left:1258px;top:1141px;font-size:23px;letter-spacing:-0.4px;color:#a3a3a3">Nov 17 at 11:30 PM GMT+1</div>
<div class="t s" style="left:1569px;top:1141px;font-size:23px;letter-spacing:-0.15px;color:#a3a3a3">Nov 19 at 8:30 PM GMT+1</div>
<div class="t s" style="left:1875px;top:1141px;font-size:23px;letter-spacing:-0.15px;color:#a3a3a3">Nov 21 at 9:00 PM GMT+1</div>
<div style="position:absolute;left:1322px;top:956px;width:400px;height:146px;background:#0a0a0a;border:2px solid #151515"></div>
<div class="t s" style="left:1344px;top:973px;font-size:25px;color:#fafafa;-webkit-text-stroke:0.3px #fafafa">Nov 17 at 9:30 AM GMT+1</div>
<div style="position:absolute;left:1344px;top:1020px;width:20px;height:20px;background:#10b981"></div>
<div class="t s" style="left:1379px;top:1017px;font-size:25.3px;color:#fafafa">p75</div>
<div class="t s" style="left:1638px;top:1017px;font-size:25.3px;color:#fafafa">83</div>
<div class="t m" style="left:1670px;top:1020.5px;font-size:23.5px;letter-spacing:1.5px;color:#a3a3a3">ms</div>
<div style="position:absolute;left:1344px;top:1064px;width:20px;height:20px;background:#fa9b02"></div>
<div class="t s" style="left:1379px;top:1061px;font-size:25.3px;color:#fafafa">p95</div>
<div class="t s" style="left:1624px;top:1061px;font-size:25.3px;color:#fafafa">248</div>
<div class="t m" style="left:1670px;top:1064.5px;font-size:23.5px;letter-spacing:1.5px;color:#a3a3a3">ms</div>


<!-- footer -->
<div class="hline" style="top:1678px"></div>
<div class="t m" style="left:862px;top:1720px;font-size:28px;color:#a3a3a3">powered by <span style="color:#fafafa">openstatus.dev</span></div>
<svg style="left:1831px;top:1720.5px" width="24" height="24" viewBox="0 0 24 24" fill="none" stroke="#737373" stroke-width="2" stroke-linecap="round" stroke-linejoin="round"><circle cx="12" cy="12" r="10"/><polyline points="12 6 12 12 16 14"/></svg>
<div class="t m" style="left:1868px;top:1721px;font-size:24px;color:#737373">Europe/Berlin</div>
<div class="btn" style="left:2087px;top:1696px;width:72px;height:72px"></div>
<svg style="left:2106.7px;top:1715.4px" width="32" height="32" viewBox="0 0 24 24" fill="none" stroke="#fafafa" stroke-width="2" stroke-linecap="round" stroke-linejoin="round"><path d="M12 3a6 6 0 0 0 9 9 9 9 0 1 1-9-9Z"/></svg>
</body></html>
